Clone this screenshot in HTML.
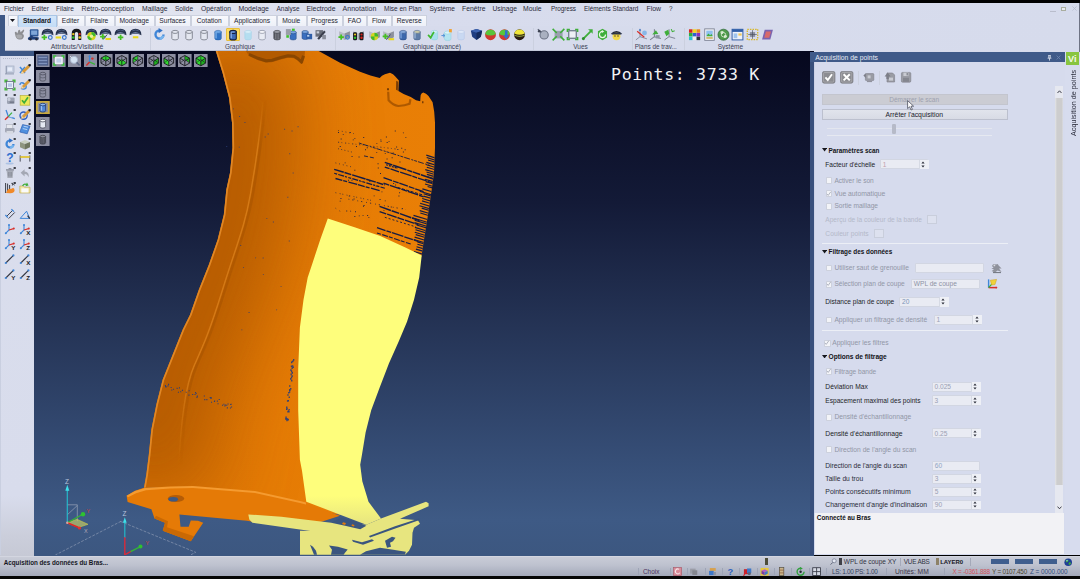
<!DOCTYPE html>
<html lang="fr"><head><meta charset="utf-8"><title>Acquisition de points</title>
<style>
html,body{margin:0;padding:0;background:#000;}
body{width:1080px;height:579px;overflow:hidden;position:relative;font-family:"Liberation Sans",sans-serif;font-size:6.7px;color:#22232e;}
#app{position:absolute;left:0;top:0;width:1080px;height:579px;overflow:hidden;background:#000;}
.abs{position:absolute;}
.t{position:absolute;white-space:nowrap;line-height:1;}
#viewport{position:absolute;left:34px;top:52px;width:779px;height:503px;background:linear-gradient(#06081e 0%,#131a37 30%,#253456 55%,#344b73 78%,#3e5a85 93%,#3c5780 100%);overflow:hidden;}
#viewport svg{position:absolute;left:0;top:0;}
.tab{position:absolute;top:14.5px;height:11.5px;box-sizing:border-box;border:0.5px solid #ccd1de;border-bottom:none;background:linear-gradient(#f8f9fd,#edf0f8);}
.inp{position:absolute;box-sizing:border-box;background:#e9ebf3;border:0.5px solid #d2d6e2;border-radius:1px;}
.cb{position:absolute;box-sizing:border-box;width:6.8px;height:6.8px;background:#f3f4f8;border:0.5px solid #cdd1dd;border-radius:0.8px;}

</style></head><body><div id="app">
<div class="abs" style="left:0.00px;top:2.80px;width:1080.00px;height:49.20px;background:linear-gradient(90deg,#e7e9f2 0%,#e0e3ef 18%,#d8dced 36%,#d6dbec 100%);"></div>
<div class="abs" style="left:5.00px;top:26.00px;width:775.00px;height:24.20px;background:linear-gradient(90deg,#e2e5f0 0%,#dcdfed 25%,#d7dbec 50%,#d6dbec);"></div>
<div class="abs" style="left:0.00px;top:14.50px;width:5.00px;height:41.50px;background:#3d5785;"></div>
<div class="abs" style="left:0.00px;top:51.00px;width:34.00px;height:5.00px;background:#3d5785;"></div>
<div class="abs" style="left:5.00px;top:50.00px;width:775.00px;height:0.70px;background:linear-gradient(90deg,#b4bacc,#c5cadb 80%,#d6dbec);"></div>
<div class="abs" style="left:1078.60px;top:2.80px;width:1.40px;height:552.00px;background:#6e7384;"></div>
<div class="t" style="left:4.00px;top:6.00px;font-size:6.70px;color:#2a2b3a;letter-spacing:-0.015px;">Fichier</div>
<div class="t" style="left:31.50px;top:6.00px;font-size:6.70px;color:#2a2b3a;">Editer</div>
<div class="t" style="left:56.00px;top:6.00px;font-size:6.60px;color:#2a2b3a;">Filaire</div>
<div class="t" style="left:81.50px;top:6.00px;font-size:6.90px;color:#2a2b3a;">Rétro-conception</div>
<div class="t" style="left:142.00px;top:6.00px;font-size:6.80px;color:#2a2b3a;letter-spacing:0.022px;">Maillage</div>
<div class="t" style="left:175.00px;top:6.00px;font-size:6.50px;color:#2a2b3a;letter-spacing:-0.011px;">Solide</div>
<div class="t" style="left:201.00px;top:6.00px;font-size:6.80px;color:#2a2b3a;letter-spacing:0.016px;">Opération</div>
<div class="t" style="left:238.50px;top:6.00px;font-size:6.90px;color:#2a2b3a;letter-spacing:0.025px;">Modelage</div>
<div class="t" style="left:276.50px;top:6.00px;font-size:6.50px;color:#2a2b3a;letter-spacing:-0.018px;">Analyse</div>
<div class="t" style="left:306.50px;top:6.00px;font-size:6.90px;color:#2a2b3a;letter-spacing:-0.016px;">Electrode</div>
<div class="t" style="left:342.50px;top:5.00px;font-size:7.00px;color:#2a2b3a;letter-spacing:0.053px;">Annotation</div>
<div class="t" style="left:384.00px;top:6.00px;font-size:6.50px;color:#2a2b3a;letter-spacing:-0.006px;">Mise en Plan</div>
<div class="t" style="left:429.50px;top:6.00px;font-size:6.60px;color:#2a2b3a;letter-spacing:-0.025px;">Système</div>
<div class="t" style="left:462.00px;top:6.00px;font-size:6.80px;color:#2a2b3a;letter-spacing:0.010px;">Fenêtre</div>
<div class="t" style="left:492.50px;top:6.00px;font-size:6.70px;color:#2a2b3a;letter-spacing:-0.012px;">Usinage</div>
<div class="t" style="left:523.00px;top:6.00px;font-size:6.80px;color:#2a2b3a;">Moule</div>
<div class="t" style="left:551.00px;top:6.00px;font-size:6.40px;color:#2a2b3a;letter-spacing:-0.076px;">Progress</div>
<div class="t" style="left:584.00px;top:6.00px;font-size:6.40px;color:#2a2b3a;">Eléments Standard</div>
<div class="t" style="left:646.50px;top:6.00px;font-size:6.90px;color:#2a2b3a;letter-spacing:-0.017px;">Flow</div>
<div class="t" style="left:669.00px;top:6.00px;font-size:6.40px;color:#2a2b3a;">?</div>
<div class="abs" style="left:1050.00px;top:10.60px;width:6.00px;height:0.80px;background:#b9bdcc;"></div>
<div class="abs" style="left:1061.40px;top:6.60px;width:4.60px;height:4.40px;background:#e9ebf1;border:0.8px solid #a9ad9f;box-sizing:border-box;"></div>
<svg class="abs" style="left:1071.60px;top:6.40px" width="5" height="5" viewBox="0 0 5 5"><path d="M0.4,0.4 L4.6,4.6 M4.6,0.4 L0.4,4.6" stroke="#b4b9c9" stroke-width="0.7"/></svg>
<div class="tab" style="left:8px;width:10px;"></div>
<svg class="abs" style="left:10.3px;top:19.3px" width="5" height="3" viewBox="0 0 5 3"><path d="M0,0H5L2.5,3Z" fill="#15161e"/></svg>
<div class="tab" style="left:18px;width:39px;background:linear-gradient(#d3e6fa,#c3dcf6);border-color:#a9c6e6;height:12px"></div>
<div class="t" style="left:22.92px;top:18.00px;font-size:6.50px;color:#15161e;font-weight:bold;">Standard</div>
<div class="tab" style="left:57px;width:28px;"></div>
<div class="t" style="left:61.75px;top:18.00px;font-size:6.70px;color:#262733;">Editer</div>
<div class="tab" style="left:85px;width:29.5px;"></div>
<div class="t" style="left:90.13px;top:18.00px;font-size:6.70px;color:#262733;">Filaire</div>
<div class="tab" style="left:114.5px;width:40.5px;"></div>
<div class="t" style="left:119.54px;top:18.00px;font-size:6.70px;color:#262733;">Modelage</div>
<div class="tab" style="left:155px;width:36px;"></div>
<div class="t" style="left:159.28px;top:18.00px;font-size:6.70px;color:#262733;">Surfaces</div>
<div class="tab" style="left:191px;width:37.5px;"></div>
<div class="t" style="left:196.77px;top:18.00px;font-size:6.70px;color:#262733;">Cotation</div>
<div class="tab" style="left:228.5px;width:48.0px;"></div>
<div class="t" style="left:233.94px;top:18.00px;font-size:6.70px;color:#262733;">Applications</div>
<div class="tab" style="left:276.5px;width:30.5px;"></div>
<div class="t" style="left:282.13px;top:18.00px;font-size:6.70px;color:#262733;">Moule</div>
<div class="tab" style="left:307px;width:36px;"></div>
<div class="t" style="left:311.10px;top:18.00px;font-size:6.70px;color:#262733;">Progress</div>
<div class="tab" style="left:343px;width:24px;"></div>
<div class="t" style="left:347.80px;top:18.00px;font-size:6.70px;color:#262733;">FAO</div>
<div class="tab" style="left:367px;width:25px;"></div>
<div class="t" style="left:371.93px;top:18.00px;font-size:6.70px;color:#262733;">Flow</div>
<div class="tab" style="left:392px;width:34.5px;"></div>
<div class="t" style="left:396.78px;top:18.00px;font-size:6.70px;color:#262733;">Reverse</div>
<div class="abs" style="left:149.50px;top:28.00px;width:0.70px;height:22.00px;background:#cbd0df;"></div>
<div class="abs" style="left:335.00px;top:28.00px;width:0.70px;height:22.00px;background:#cbd0df;"></div>
<div class="abs" style="left:533.00px;top:28.00px;width:0.70px;height:22.00px;background:#cbd0df;"></div>
<div class="abs" style="left:631.50px;top:28.00px;width:0.70px;height:22.00px;background:#cbd0df;"></div>
<div class="abs" style="left:684.00px;top:28.00px;width:0.70px;height:22.00px;background:#cbd0df;"></div>
<div class="t" style="left:50.70px;top:44.00px;font-size:6.90px;color:#3b3f55;letter-spacing:0.010px;">Attributs/Visibilité</div>
<div class="t" style="left:225.00px;top:44.00px;font-size:6.40px;color:#3b3f55;letter-spacing:0.013px;">Graphique</div>
<div class="t" style="left:403.00px;top:44.00px;font-size:6.60px;color:#3b3f55;letter-spacing:-0.018px;">Graphique (avancé)</div>
<div class="t" style="left:573.30px;top:44.00px;font-size:6.50px;color:#3b3f55;letter-spacing:-0.019px;">Vues</div>
<div class="t" style="left:634.70px;top:44.00px;font-size:6.40px;color:#3b3f55;letter-spacing:-0.007px;">Plans de trav...</div>
<div class="t" style="left:717.80px;top:44.00px;font-size:6.50px;color:#3b3f55;letter-spacing:-0.012px;">Système</div>
<svg class="abs" style="left:12.50px;top:27.90px" width="13" height="13" viewBox="0 0 12 12"><path d="M2,6 Q1,3 3,3.5 L4,5 L5,2 Q6,1 6.6,2.4 L7,4 L9.5,1.5 Q11,1.4 10,3.2 L8.6,5.6 Q10.5,6 10,8 Q9,11 5.5,10.6 Q2.5,10 2,6Z" fill="#8d8e92"/><path d="M3,6.5 Q5,5.5 8,6.4 Q9,8 8,9.5 Q5,10.3 3.4,9Z" fill="#a9aaae"/></svg>
<svg class="abs" style="left:26.50px;top:27.90px" width="13" height="13" viewBox="0 0 12 12"><rect x="2.6" y="1.2" width="8" height="6.6" rx="0.8" fill="#2d5796"/><rect x="3.8" y="2.3" width="5.6" height="4" fill="#7fa6d8"/><path d="M0.8,9.2 L4,6.6 L6,8 L10.8,8.6 L10.8,10.6 L1,10.8Z" fill="#1f3f78"/><circle cx="3.2" cy="10.4" r="1.1" fill="#22283a"/><circle cx="8.8" cy="10.4" r="1.1" fill="#22283a"/></svg>
<svg class="abs" style="left:41.10px;top:27.90px" width="13" height="13" viewBox="0 0 12 12"><path d="M0.5,6.6 Q0.6,0.8 6,0.8 Q11.4,0.8 11.5,6.6 Q6,4.2 0.5,6.6Z" fill="#26324d"/><path d="M1.4,5.6 Q6,2.2 10.6,5.6 Q6,4.3 1.4,5.6Z" fill="#8ea2c4"/><path d="M3,2.6 Q6,1.2 9,2.6" stroke="#55688e" stroke-width="0.7" fill="none"/><path transform="translate(0.6,6.2)" d="M0,1.6h1.7v-1.6h1.6v1.6h1.7v1.6h-1.7v1.6h-1.6v-1.6h-1.7z" fill="#45c022"/><circle cx="8.6" cy="8.8" r="1.7" fill="none" stroke="#3a78cc" stroke-width="1.1"/></svg>
<svg class="abs" style="left:55.10px;top:27.90px" width="13" height="13" viewBox="0 0 12 12"><path d="M0.5,6.6 Q0.6,0.8 6,0.8 Q11.4,0.8 11.5,6.6 Q6,4.2 0.5,6.6Z" fill="#26324d"/><path d="M1.4,5.6 Q6,2.2 10.6,5.6 Q6,4.3 1.4,5.6Z" fill="#8ea2c4"/><path d="M3,2.6 Q6,1.2 9,2.6" stroke="#55688e" stroke-width="0.7" fill="none"/><rect x="0.6" y="7.8" width="5" height="1.9" fill="#e9d91c"/><circle cx="8.6" cy="8.8" r="1.7" fill="none" stroke="#3a78cc" stroke-width="1.1"/></svg>
<svg class="abs" style="left:69.70px;top:27.90px" width="13" height="13" viewBox="0 0 12 12"><path d="M1.6,11 V5 Q1.6,0.8 6,0.8 Q10.4,0.8 10.4,5 V11 H7.6 V5.4 Q7.6,3.6 6,3.6 Q4.4,3.6 4.4,5.4 V11Z" fill="#17181c"/><circle cx="3" cy="5.6" r="1.1" fill="#e9c61c"/><circle cx="3" cy="8.8" r="1.2" fill="#2fbf2f"/><circle cx="9" cy="5.6" r="1.1" fill="#d8261c"/><circle cx="9" cy="8.8" r="1.2" fill="#e9c61c"/></svg>
<svg class="abs" style="left:84.50px;top:27.90px" width="13" height="13" viewBox="0 0 12 12"><path d="M0.5,6.6 Q0.6,0.8 6,0.8 Q11.4,0.8 11.5,6.6 Q6,4.2 0.5,6.6Z" fill="#26324d"/><path d="M1.4,5.6 Q6,2.2 10.6,5.6 Q6,4.3 1.4,5.6Z" fill="#8ea2c4"/><path d="M3,2.6 Q6,1.2 9,2.6" stroke="#55688e" stroke-width="0.7" fill="none"/><circle cx="6" cy="7.6" r="3.8" fill="#d6d41e"/><path d="M6,3.8 A3.8,3.8 0 0 1 9.8,7.6 L6,7.6Z" fill="#3fb82e"/><path d="M2.2,7.6 A3.8,3.8 0 0 0 6,11.4 L6,7.6Z" fill="#3fb82e"/><circle cx="6" cy="7.6" r="1.6" fill="#e8ef9a"/></svg>
<svg class="abs" style="left:99.00px;top:27.90px" width="13" height="13" viewBox="0 0 12 12"><path d="M0.5,6.6 Q0.6,0.8 6,0.8 Q11.4,0.8 11.5,6.6 Q6,4.2 0.5,6.6Z" fill="#26324d"/><path d="M1.4,5.6 Q6,2.2 10.6,5.6 Q6,4.3 1.4,5.6Z" fill="#8ea2c4"/><path d="M3,2.6 Q6,1.2 9,2.6" stroke="#55688e" stroke-width="0.7" fill="none"/><path transform="translate(1,5.6)" d="M0,1.6h1.7v-1.6h1.6v1.6h1.7v1.6h-1.7v1.6h-1.6v-1.6h-1.7z" fill="#45c022"/><rect x="6" y="9.2" width="5" height="1.9" fill="#e9d91c"/><path d="M4,10.5 L7.6,6" stroke="#3b4a6a" stroke-width="0.9"/></svg>
<svg class="abs" style="left:114.00px;top:27.90px" width="13" height="13" viewBox="0 0 12 12"><path d="M0.5,6.6 Q0.6,0.8 6,0.8 Q11.4,0.8 11.5,6.6 Q6,4.2 0.5,6.6Z" fill="#26324d"/><path d="M1.4,5.6 Q6,2.2 10.6,5.6 Q6,4.3 1.4,5.6Z" fill="#8ea2c4"/><path d="M3,2.6 Q6,1.2 9,2.6" stroke="#55688e" stroke-width="0.7" fill="none"/><path transform="translate(3.6,6.2)" d="M0,1.6h1.7v-1.6h1.6v1.6h1.7v1.6h-1.7v1.6h-1.6v-1.6h-1.7z" fill="#45c022"/></svg>
<svg class="abs" style="left:128.50px;top:27.90px" width="13" height="13" viewBox="0 0 12 12"><path d="M0.5,6.6 Q0.6,0.8 6,0.8 Q11.4,0.8 11.5,6.6 Q6,4.2 0.5,6.6Z" fill="#26324d"/><path d="M1.4,5.6 Q6,2.2 10.6,5.6 Q6,4.3 1.4,5.6Z" fill="#8ea2c4"/><path d="M3,2.6 Q6,1.2 9,2.6" stroke="#55688e" stroke-width="0.7" fill="none"/><rect x="3.6" y="7.6" width="5" height="1.9" fill="#e9d91c"/></svg>
<svg class="abs" style="left:152.80px;top:27.90px" width="13" height="13" viewBox="0 0 12 12"><path d="M6,1.2 A4.8,4.8 0 1 0 10.8,6 H8.6 A2.6,2.6 0 1 1 6,3.4 Z" fill="#3f86d8"/><path d="M5.2,0 L9,2.4 L5.2,4.8Z" fill="#2f6fc4"/><path d="M6,10.8 A4.8,4.8 0 0 0 10.6,7.4 L8.4,7 A2.6,2.6 0 0 1 6,8.6Z" fill="#76b4ee"/></svg>
<svg class="abs" style="left:168.50px;top:27.90px" width="13" height="13" viewBox="0 0 12 12"><path d="M2.6,3.6 V9.6 A3,1.4 0 0 0 8.6,9.6 V3.6 Z" fill="#e4e7f0" stroke="#7a7e8a" stroke-width="0.8"/><ellipse cx="5.6" cy="3.6" rx="3" ry="1.4" fill="#e4e7f0" stroke="#7a7e8a" stroke-width="0.8"/></svg>
<svg class="abs" style="left:183.00px;top:27.90px" width="13" height="13" viewBox="0 0 12 12"><path d="M2.6,3.6 V9.6 A3,1.4 0 0 0 8.6,9.6 V3.6 Z" fill="#e4e7f0" stroke="#7a7e8a" stroke-width="0.8"/><ellipse cx="5.6" cy="3.6" rx="3" ry="1.4" fill="#e4e7f0" stroke="#7a7e8a" stroke-width="0.8"/></svg>
<svg class="abs" style="left:197.80px;top:27.90px" width="13" height="13" viewBox="0 0 12 12"><path d="M2.6,3.6 V9.6 A3,1.4 0 0 0 8.6,9.6 V3.6 Z" fill="#e4e7f0" stroke="#7a7e8a" stroke-width="0.8"/><ellipse cx="5.6" cy="3.6" rx="3" ry="1.4" fill="#e4e7f0" stroke="#7a7e8a" stroke-width="0.8"/></svg>
<svg class="abs" style="left:212.30px;top:27.90px" width="13" height="13" viewBox="0 0 12 12"><path d="M2.6,3.6 V9.6 A3,1.4 0 0 0 8.6,9.6 V3.6 Z" fill="#2f73c6" stroke="#245ea8" stroke-width="0.5"/><ellipse cx="5.6" cy="3.6" rx="3" ry="1.4" fill="#6ea6e4" stroke="#245ea8" stroke-width="0.5"/><rect x="3" y="3.6" width="1.5" height="6" fill="#79b0ea" opacity="0.8"/></svg>
<div class="abs" style="left:226.00px;top:27.60px;width:13.60px;height:13.60px;background:#fbdc63;border-radius:1px;border:0.5px solid #e9bf3a;box-sizing:border-box;"></div>
<svg class="abs" style="left:226.70px;top:27.90px" width="13" height="13" viewBox="0 0 12 12"><path d="M2.6,3.6 V9.6 A3,1.4 0 0 0 8.6,9.6 V3.6 Z" fill="#3b69b6" stroke="#15213f" stroke-width="1.0"/><ellipse cx="5.6" cy="3.6" rx="3" ry="1.4" fill="#5f8ad0" stroke="#15213f" stroke-width="1.0"/><rect x="3.2" y="3.8" width="1.4" height="5.6" fill="#8db2e8" opacity="0.8"/></svg>
<svg class="abs" style="left:241.90px;top:27.90px" width="13" height="13" viewBox="0 0 12 12"><path d="M2.6,3.6 V9.6 A3,1.4 0 0 0 8.6,9.6 V3.6 Z" fill="#b4def0" stroke="#a4d0e6" stroke-width="0.5"/><ellipse cx="5.6" cy="3.6" rx="3" ry="1.4" fill="#d6eef8" stroke="#a4d0e6" stroke-width="0.5"/></svg>
<svg class="abs" style="left:256.30px;top:27.90px" width="13" height="13" viewBox="0 0 12 12"><path d="M2.6,3.6 V9.6 A3,1.4 0 0 0 8.6,9.6 V3.6 Z" fill="#e9ecf4" stroke="#8d93a4" stroke-width="0.7"/><ellipse cx="5.6" cy="3.6" rx="3" ry="1.4" fill="#f5f6fa" stroke="#8d93a4" stroke-width="0.7"/></svg>
<svg class="abs" style="left:270.80px;top:27.90px" width="13" height="13" viewBox="0 0 12 12"><path d="M2.6,3.6 V9.6 A3,1.4 0 0 0 8.6,9.6 V3.6 Z" fill="#7c7f88" stroke="#4c4f58" stroke-width="0.7"/><ellipse cx="5.6" cy="3.6" rx="3" ry="1.4" fill="#9a9da6" stroke="#4c4f58" stroke-width="0.7"/><path d="M3.4,4.4V9.8M5.5,4.8V10.6M7.6,4.4V9.8" stroke="#3e4048" stroke-width="0.7"/></svg>
<svg class="abs" style="left:284.80px;top:27.90px" width="13" height="13" viewBox="0 0 12 12"><g transform="translate(2.2,0.6) scale(0.95)"><path d="M2.6,3.6 V9.6 A3,1.4 0 0 0 8.6,9.6 V3.6 Z" fill="#3a6fc0" stroke="#23467e" stroke-width="0.5"/><ellipse cx="5.6" cy="3.6" rx="3" ry="1.4" fill="#7aa6e0" stroke="#23467e" stroke-width="0.5"/></g><rect x="0.8" y="1" width="4.6" height="5.4" fill="#9a9ea8"/><rect x="1.2" y="6.6" width="2.4" height="2.4" fill="#3fc02a"/><rect x="6.4" y="0.6" width="2.6" height="2" fill="#3fc02a"/></svg>
<svg class="abs" style="left:299.80px;top:27.90px" width="13" height="13" viewBox="0 0 12 12"><g transform="translate(-0.6,0.2) scale(0.95)"><path d="M2.6,3.6 V9.6 A3,1.4 0 0 0 8.6,9.6 V3.6 Z" fill="#3a6fc0" stroke="#23467e" stroke-width="0.5"/><ellipse cx="5.6" cy="3.6" rx="3" ry="1.4" fill="#7aa6e0" stroke="#23467e" stroke-width="0.5"/></g><rect x="5.6" y="5.4" width="5.6" height="5" fill="#2f5ea8"/><rect x="6.6" y="6.4" width="2" height="1.6" fill="#b9d2f0"/></svg>
<svg class="abs" style="left:314.00px;top:27.90px" width="13" height="13" viewBox="0 0 12 12"><rect x="1.4" y="2" width="7" height="6" fill="#6a6e7a"/><path d="M3,9.6 L9.4,2.4 L10.8,3.6 L4.6,10.8Z" fill="#3a3e4c"/><rect x="7.6" y="6.4" width="3.4" height="4" fill="#8b8f9c"/><rect x="2.4" y="3" width="2.4" height="2" fill="#c9cdd8"/></svg>
<svg class="abs" style="left:338.00px;top:27.90px" width="13" height="13" viewBox="0 0 12 12"><path d="M1,3 L6,1 L11,3 L6,5Z" fill="#d9dce3"/><path d="M1,3 L6,5 V11 L1,8.6Z" fill="#b8bcc6"/><path d="M11,3 L6,5 V11 L11,8.6Z" fill="#8d919c"/><path transform="translate(0.4,6)" d="M0,1.6h1.7v-1.6h1.6v1.6h1.7v1.6h-1.7v1.6h-1.6v-1.6h-1.7z" fill="#45c022"/><circle cx="8.8" cy="8.6" r="1.7" fill="none" stroke="#3a78cc" stroke-width="1.1"/></svg>
<svg class="abs" style="left:352.30px;top:27.90px" width="13" height="13" viewBox="0 0 12 12"><path d="M1,3 L6,1 L11,3 L6,5Z" fill="#d9dce3"/><path d="M1,3 L6,5 V11 L1,8.6Z" fill="#b8bcc6"/><path d="M11,3 L6,5 V11 L11,8.6Z" fill="#8d919c"/><rect x="1" y="4" width="3.6" height="7.4" rx="1" fill="#17181c"/><rect x="7" y="4" width="3.6" height="7.4" rx="1" fill="#17181c"/><circle cx="2.8" cy="6" r="1" fill="#e9c61c"/><circle cx="2.8" cy="9" r="1.1" fill="#2fbf2f"/><circle cx="8.8" cy="6" r="1" fill="#d8261c"/><circle cx="8.8" cy="9" r="1.1" fill="#d8261c"/></svg>
<svg class="abs" style="left:367.50px;top:27.90px" width="13" height="13" viewBox="0 0 12 12"><path d="M1,3 L6,1 L11,3 L6,5Z" fill="#d9dce3"/><path d="M1,3 L6,5 V11 L1,8.6Z" fill="#b8bcc6"/><path d="M11,3 L6,5 V11 L11,8.6Z" fill="#8d919c"/><circle cx="6" cy="7.8" r="3.4" fill="#d6d41e"/><path d="M6,4.4 A3.4,3.4 0 0 1 9.4,7.8 L6,7.8Z" fill="#3fb82e"/><path d="M2.6,7.8 A3.4,3.4 0 0 0 6,11.2 L6,7.8Z" fill="#3fb82e"/></svg>
<svg class="abs" style="left:381.80px;top:27.90px" width="13" height="13" viewBox="0 0 12 12"><path d="M1,3 L6,1 L11,3 L6,5Z" fill="#d9dce3"/><path d="M1,3 L6,5 V11 L1,8.6Z" fill="#b8bcc6"/><path d="M11,3 L6,5 V11 L11,8.6Z" fill="#8d919c"/><path transform="translate(0.6,5.4)" d="M0,1.6h1.7v-1.6h1.6v1.6h1.7v1.6h-1.7v1.6h-1.6v-1.6h-1.7z" fill="#45c022"/><rect x="6.2" y="9.4" width="5" height="1.9" fill="#e9d91c"/><path d="M4,10.8 L7.8,6" stroke="#3b4a6a" stroke-width="0.9"/></svg>
<svg class="abs" style="left:397.10px;top:27.90px" width="13" height="13" viewBox="0 0 12 12"><path d="M2.6,3.6 V9.6 A3,1.4 0 0 0 8.6,9.6 V3.6 Z" fill="#3d68ac" stroke="#2a4a82" stroke-width="0.5"/><ellipse cx="5.6" cy="3.6" rx="3" ry="1.4" fill="#86a8d8" stroke="#2a4a82" stroke-width="0.5"/><rect x="3" y="3.8" width="1.4" height="5.8" fill="#8db2e8" opacity="0.7"/></svg>
<svg class="abs" style="left:411.30px;top:27.90px" width="13" height="13" viewBox="0 0 12 12"><path d="M2.6,3.6 V9.6 A3,1.4 0 0 0 8.6,9.6 V3.6 Z" fill="#5f7da8" stroke="#46608a" stroke-width="0.5"/><ellipse cx="5.6" cy="3.6" rx="3" ry="1.4" fill="#c9c9a8" stroke="#46608a" stroke-width="0.5"/><rect x="3" y="3.8" width="1.4" height="5.8" fill="#a8bfe0" opacity="0.7"/></svg>
<svg class="abs" style="left:426.70px;top:27.90px" width="13" height="13" viewBox="0 0 12 12"><g transform="translate(1.2,0)"><path d="M2.6,3.6 V9.6 A3,1.4 0 0 0 8.6,9.6 V3.6 Z" fill="#a8e0ee" stroke="#8fd0e2" stroke-width="0.5"/><ellipse cx="5.6" cy="3.6" rx="3" ry="1.4" fill="#d2f0f8" stroke="#8fd0e2" stroke-width="0.5"/></g><path d="M1,6.4 L3.4,9 L6.4,3.6" stroke="#3fb82e" stroke-width="1.6" fill="none"/></svg>
<svg class="abs" style="left:441.00px;top:27.90px" width="13" height="13" viewBox="0 0 12 12"><g transform="translate(0.6,0.6)"><path d="M2.6,3.6 V9.6 A3,1.4 0 0 0 8.6,9.6 V3.6 Z" fill="#b4e4f0" stroke="#8fd0e2" stroke-width="0.5"/><ellipse cx="5.6" cy="3.6" rx="3" ry="1.4" fill="#d8f2f8" stroke="#8fd0e2" stroke-width="0.5"/></g><rect x="7.4" y="1" width="2.6" height="3" fill="#f0a030"/><path d="M0.4,7 h3 M2,5.6 L3.6,7 L2,8.4" stroke="#4a90d8" stroke-width="0.9" fill="none"/></svg>
<svg class="abs" style="left:455.30px;top:27.90px" width="13" height="13" viewBox="0 0 12 12"><path d="M2.6,3.6 V9.6 A3,1.4 0 0 0 8.6,9.6 V3.6 Z" fill="#c9d9f2" stroke="#b4c6e6" stroke-width="0.5"/><ellipse cx="5.6" cy="3.6" rx="3" ry="1.4" fill="#dfe9f8" stroke="#b4c6e6" stroke-width="0.5"/></svg>
<svg class="abs" style="left:470.00px;top:27.90px" width="13" height="13" viewBox="0 0 12 12"><path d="M0.8,2.6 L6,1 L11.2,2.6 L10,8 L6,11 L2,8Z" fill="#1f3d80"/><path d="M0.8,2.6 L6,4.4 L11.2,2.6 L6,1Z" fill="#3d63b0"/><path d="M6,4.4 L6,11 L10,8 L11.2,2.6Z" fill="#142a5c"/></svg>
<svg class="abs" style="left:483.50px;top:27.90px" width="13" height="13" viewBox="0 0 12 12"><circle cx="6" cy="6.2" r="5" fill="#cf3a30"/><path d="M1.1,5.6 A5,5 0 0 1 10.9,5.6 Q6,8.4 1.1,5.6Z" fill="#58c63a"/></svg>
<svg class="abs" style="left:498.10px;top:27.90px" width="13" height="13" viewBox="0 0 12 12"><circle cx="6" cy="6.2" r="5" fill="#cf3a30"/><path d="M1.1,5.6 A5,5 0 0 1 10.9,5.6 Q6,8.4 1.1,5.6Z" fill="#58c63a"/><path d="M6.4,2 h2.4 v4.6 h1.6 L7.6,10.4 L4.8,6.6 h1.6z" fill="#2f6fd0"/></svg>
<svg class="abs" style="left:513.00px;top:27.90px" width="13" height="13" viewBox="0 0 12 12"><circle cx="6" cy="6.2" r="5" fill="#2a1c12"/><path d="M1.2,5 A5,5 0 0 1 10.8,5 Q6,7.4 1.2,5Z" fill="#f0e63a"/><path d="M1.1,6.4 Q6,9 10.9,6.4" stroke="#8a9a3a" stroke-width="1" fill="none"/></svg>
<svg class="abs" style="left:537.30px;top:27.90px" width="13" height="13" viewBox="0 0 12 12"><circle cx="6.6" cy="6.4" r="3.8" fill="#a9b0c0" stroke="#6d7486" stroke-width="1"/><path d="M0.8,1.2 L4,4" stroke="#5d6476" stroke-width="1.4"/><circle cx="2" cy="3" r="1.2" fill="#3a4050"/></svg>
<svg class="abs" style="left:551.80px;top:27.90px" width="13" height="13" viewBox="0 0 12 12"><rect x="2.4" y="2.6" width="7.4" height="7" fill="#9aa0ae"/><path d="M0.6,0.8 L4.4,4.6 M11.4,0.8 L7.6,4.6 M0.6,11.4 L4.4,7.6 M11.4,11.4 L7.6,7.6" stroke="#3fae3a" stroke-width="1.5"/></svg>
<svg class="abs" style="left:566.30px;top:27.90px" width="13" height="13" viewBox="0 0 12 12"><rect x="2.6" y="2.6" width="6.8" height="6.8" fill="#eef0f6" stroke="#3a4a5a" stroke-width="0.8"/><path d="M0.6,0.6 h3 v1.4 h-1.6 v1.6 h-1.4z M11.4,0.6 h-3 v1.4 h1.6 v1.6 h1.4z M0.6,11.4 h3 v-1.4 h-1.6 v-1.6 h-1.4z M11.4,11.4 h-3 v-1.4 h1.6 v-1.6 h1.4z" fill="#3fae3a"/></svg>
<svg class="abs" style="left:581.30px;top:27.90px" width="13" height="13" viewBox="0 0 12 12"><path d="M2,10 L9.6,2.4" stroke="#3fae3a" stroke-width="1.7"/><path d="M6.6,1.2 L10.8,1.2 L10.8,5.4Z" fill="#3fae3a"/><circle cx="2.2" cy="9.8" r="1.4" fill="#2f8e2e"/></svg>
<svg class="abs" style="left:595.80px;top:27.90px" width="13" height="13" viewBox="0 0 12 12"><path d="M6,0.8 L10.2,3 V8.8 L6,11.2 L1.8,8.8 V3Z" fill="#3fae3a"/><path d="M6,3.2 A2.8,2.8 0 1 0 8.8,6" stroke="#eaf6e6" stroke-width="1.1" fill="none"/><path d="M5.4,1.8 L7.6,3.2 L5.4,4.6Z" fill="#eaf6e6"/></svg>
<svg class="abs" style="left:609.50px;top:27.90px" width="13" height="13" viewBox="0 0 12 12"><circle cx="6" cy="7.6" r="3.6" fill="#f2d94a"/><path d="M0.6,5.2 Q6,0.2 11.4,5.2 Q6,3.6 0.6,5.2Z" fill="#22283a"/><rect x="1.2" y="4.6" width="9.6" height="1.4" rx="0.7" fill="#2c3448"/><circle cx="4.6" cy="7.4" r="0.6" fill="#3a2a14"/><circle cx="7.4" cy="7.4" r="0.6" fill="#3a2a14"/></svg>
<svg class="abs" style="left:634.90px;top:27.90px" width="13" height="13" viewBox="0 0 12 12"><path d="M4.6,8 L4.6,1 M4.6,8 L11,10 M4.6,8 L0.8,11" stroke="#8a8fa0" stroke-width="0.9" fill="none"/><path d="M3.4,2.6 L4.6,0.4 L5.8,2.6Z" fill="#3a78cc"/><path d="M2,3 L8.6,8.6" stroke="#d8302a" stroke-width="1.1"/><circle cx="8.8" cy="4.6" r="2.2" fill="#7ab0e6" opacity="0.85"/></svg>
<svg class="abs" style="left:649.30px;top:27.90px" width="13" height="13" viewBox="0 0 12 12"><path d="M5,8 L5,1.2 M5,8 L11,9.6 M5,8 L1,11" stroke="#7d8292" stroke-width="1"/><path d="M3,6 L6.4,2 L8.6,5.6Z" fill="#3fae3a"/><rect x="6.2" y="6.6" width="3.6" height="3" fill="#8d93a4"/></svg>
<svg class="abs" style="left:662.50px;top:27.90px" width="13" height="13" viewBox="0 0 12 12"><path d="M5.6,8 L5.6,1.2 M5.6,8 L11.2,9.6 M5.6,8 L1.4,11" stroke="#7d8292" stroke-width="0.9"/><path d="M1.2,3.4 L4.8,1.6 L5.8,5.4 L3.2,7.6Z" fill="#3fae3a"/><path d="M7.6,1 L8.6,3.4 L10.8,2.6" stroke="#3fae3a" stroke-width="1" fill="none"/></svg>
<svg class="abs" style="left:687.80px;top:27.90px" width="13" height="13" viewBox="0 0 12 12"><rect x="0.9" y="1.2" width="3.3" height="3.2" fill="#d8261c"/><rect x="4.4" y="1.2" width="3.3" height="3.2" fill="#f0d81c"/><rect x="7.9" y="1.2" width="3.3" height="3.2" fill="#e88a1c"/><rect x="0.9" y="4.6" width="3.3" height="3.2" fill="#2fae3a"/><rect x="4.4" y="4.6" width="3.3" height="3.2" fill="#2f5fd0"/><rect x="7.9" y="4.6" width="3.3" height="3.2" fill="#8a2fc0"/><rect x="0.9" y="8.0" width="3.3" height="3.2" fill="#2fc0d0"/><rect x="4.4" y="8.0" width="3.3" height="3.2" fill="#f0f0f0"/><rect x="7.9" y="8.0" width="3.3" height="3.2" fill="#30343f"/></svg>
<svg class="abs" style="left:702.80px;top:27.90px" width="13" height="13" viewBox="0 0 12 12"><rect x="1.6" y="0.8" width="8.8" height="10.6" fill="#f2f3f7" stroke="#7a8092" stroke-width="0.8"/><rect x="3" y="2.4" width="6" height="5.2" fill="#8fc0ee"/><path d="M3,7.6 L5,5 L6.6,6.6 L7.8,5.6 L9,7.6Z" fill="#3fae3a"/><rect x="3" y="8.6" width="6" height="1.2" fill="#c2a03a"/></svg>
<svg class="abs" style="left:716.70px;top:27.90px" width="13" height="13" viewBox="0 0 12 12"><circle cx="6" cy="6.2" r="5.1" fill="#4f9a4a" stroke="#2f6a3a" stroke-width="0.7"/><path d="M3,3.4 Q5,2 6.4,3.6 Q5.6,5.8 3.8,6Z M6.6,6.6 Q9,6 9.4,7.8 Q8,10 6.4,9Z" fill="#cfe6c6"/><circle cx="6" cy="6.2" r="2" fill="none" stroke="#e6f0e0" stroke-width="0.7"/></svg>
<svg class="abs" style="left:731.10px;top:27.90px" width="13" height="13" viewBox="0 0 12 12"><rect x="1" y="1.2" width="10" height="9.8" fill="#eef2fa" stroke="#2f5ea8" stroke-width="0.9"/><rect x="1" y="1.2" width="10" height="2.4" fill="#2f5ea8"/><rect x="2.4" y="5" width="3.4" height="4.4" fill="#9ec4ee"/><rect x="6.8" y="5" width="3" height="2" fill="#f0c85a"/></svg>
<svg class="abs" style="left:745.60px;top:27.90px" width="13" height="13" viewBox="0 0 12 12"><rect x="1.2" y="1.2" width="9.6" height="9.6" fill="none" stroke="#d8b82a" stroke-width="1.2" stroke-dasharray="1.4 1"/><rect x="3.6" y="3.8" width="4.8" height="4.4" fill="#8a90a0"/><path d="M2,6 h8 M6,2 v8" stroke="#4a5060" stroke-width="0.6"/></svg>
<svg class="abs" style="left:760.70px;top:27.90px" width="13" height="13" viewBox="0 0 12 12"><path d="M3.4,1.6 L11,1.6 L8.6,10.6 L1,10.6Z" fill="#7a64b0"/><path d="M4.6,3.2 L9.2,3.2 L7.6,9 L3,9Z" fill="#d86a6a"/></svg>
<div class="abs" style="left:0.00px;top:55.60px;width:34.00px;height:500.00px;background:linear-gradient(#dadeed 0%,#d8dcec 88%,#cbcedb 96%,#c6c9d5 100%);"></div>
<div class="abs" style="left:0.00px;top:55.60px;width:1.20px;height:499.40px;background:#c9cfe0;"></div>
<div class="abs" style="left:3.00px;top:58.00px;width:26.00px;height:1.20px;background:repeating-linear-gradient(90deg,#b3b9cb 0 0.8px,transparent 0.8px 2px);"></div>
<div class="abs" style="left:3.00px;top:200.50px;width:28.00px;height:0.80px;background:repeating-linear-gradient(90deg,#b3b9cb 0 0.8px,transparent 0.8px 2px);"></div>
<svg class="abs" style="left:3.90px;top:64.20px" width="12" height="12" viewBox="0 0 12 12"><rect x="2" y="2" width="8" height="6.4" fill="#c9d2e4" stroke="#a9b2c6" stroke-width="0.8"/><rect x="3.6" y="3.4" width="4.4" height="3.4" fill="#e8eefa"/><rect x="1" y="9" width="9" height="1.6" fill="#aab2c6"/><path d="M2.4,2 V10" stroke="#8d96ac" stroke-width="0.8"/></svg>
<svg class="abs" style="left:18.60px;top:64.20px" width="12" height="12" viewBox="0 0 12 12"><path d="M1,3 L6,9 M6,3 L1,9" stroke="#3f86d8" stroke-width="1.5"/><path d="M2.2,9.8 L3,7 L9,1 L11,3 L5,9Z" fill="#d89a3a"/><path d="M9,1 L11,3 L11.6,1.6 L10.4,0.4Z" fill="#20222c"/><path d="M2.2,9.8 L3,7 L5,9Z" fill="#f0d8a8"/><rect x="9.6" y="0.2" width="2.2" height="1.6" fill="#15161c"/></svg>
<svg class="abs" style="left:3.90px;top:79.10px" width="12" height="12" viewBox="0 0 12 12"><rect x="2.6" y="2.6" width="6.8" height="6.8" fill="#e8eefa" stroke="#4a5a6a" stroke-width="0.7"/><rect x="4" y="4.4" width="4" height="3.4" fill="#b8cbe8"/><path d="M0.4,0.4 h3.2 v1.6 h-1.6 v1.6 h-1.6z M11.6,0.4 h-3.2 v1.6 h1.6 v1.6 h1.6z M0.4,11.6 h3.2 v-1.6 h-1.6 v-1.6 h-1.6z M11.6,11.6 h-3.2 v-1.6 h1.6 v-1.6 h1.6z" fill="#4bb83f"/></svg>
<svg class="abs" style="left:18.60px;top:79.10px" width="12" height="12" viewBox="0 0 12 12"><path d="M1,6 Q1,3 4,4 Q8,6 7,9 Q5,11 2,9.4" stroke="#3f86d8" stroke-width="1.4" fill="none"/><path d="M2.2,9.8 L3,7 L9,1 L11,3 L5,9Z" fill="#d89a3a"/><path d="M9,1 L11,3 L11.6,1.6 L10.4,0.4Z" fill="#20222c"/><path d="M2.2,9.8 L3,7 L5,9Z" fill="#f0d8a8"/><rect x="9.6" y="0.2" width="2.2" height="1.6" fill="#15161c"/></svg>
<svg class="abs" style="left:3.90px;top:94.00px" width="12" height="12" viewBox="0 0 12 12"><path d="M1,1 h2.4 M2.2,0 v2.2" stroke="#20222c" stroke-width="0.8"/><rect x="3" y="3.4" width="7.6" height="6.6" rx="1.2" fill="#9da3b3"/><circle cx="5" cy="5.4" r="1.6" fill="#c9cedb"/><rect x="5.6" y="7.4" width="4.4" height="1.6" fill="#757b8c"/><rect x="9.6" y="0.2" width="2.2" height="1.6" fill="#15161c"/></svg>
<svg class="abs" style="left:18.60px;top:94.00px" width="12" height="12" viewBox="0 0 12 12"><rect x="1.2" y="1.6" width="9.6" height="9.6" fill="#eee85a" stroke="#b8b23a" stroke-width="0.7"/><path d="M3,6.2 L5.2,8.8 L9,3.2" stroke="#3fae3a" stroke-width="1.7" fill="none"/><rect x="9.6" y="0.2" width="2.2" height="1.6" fill="#15161c"/></svg>
<svg class="abs" style="left:3.90px;top:108.60px" width="12" height="12" viewBox="0 0 12 12"><path d="M2,1 L4.4,7.4 L10.8,9.6" stroke="#3f86d8" stroke-width="1.3" fill="none"/><path d="M4.4,7.4 L1,10.8" stroke="#d8302a" stroke-width="1.4"/><circle cx="7.4" cy="5.6" r="2.8" fill="#cfe0f4" opacity="0.9"/><path d="M4.4,7.4 L8,3.6" stroke="#3fae3a" stroke-width="1.2"/><rect x="9.6" y="0.2" width="2.2" height="1.6" fill="#15161c"/></svg>
<svg class="abs" style="left:18.60px;top:108.60px" width="12" height="12" viewBox="0 0 12 12"><circle cx="4.6" cy="6.6" r="3.6" stroke="#2f5fc0" stroke-width="1.4" fill="none"/><path d="M2,9.2 L7.2,4" stroke="#2f5fc0" stroke-width="1.2"/><path d="M2.2,9.8 L3,7 L9,1 L11,3 L5,9Z" fill="#d89a3a"/><path d="M9,1 L11,3 L11.6,1.6 L10.4,0.4Z" fill="#20222c"/><path d="M2.2,9.8 L3,7 L5,9Z" fill="#f0d8a8"/><rect x="9.6" y="0.2" width="2.2" height="1.6" fill="#15161c"/></svg>
<svg class="abs" style="left:3.90px;top:123.20px" width="12" height="12" viewBox="0 0 12 12"><rect x="2.4" y="1.4" width="6.4" height="4" fill="#e6e8ee" stroke="#a9adba" stroke-width="0.6"/><rect x="1" y="5" width="9.6" height="4.4" rx="0.8" fill="#a4a8b6"/><rect x="2.6" y="8" width="6.4" height="2.8" fill="#d6d9e2"/><rect x="9.6" y="0.2" width="2.2" height="1.6" fill="#15161c"/></svg>
<svg class="abs" style="left:18.60px;top:123.20px" width="12" height="12" viewBox="0 0 12 12"><path d="M3.6,1.6 L11,3.2 L8.2,10.8 L0.8,9Z" fill="#4f8fde" stroke="#2f5fb0" stroke-width="0.7"/><path d="M4.6,3.2 L9,4.2 M3.8,5.6 L8.2,6.6" stroke="#cfe2fa" stroke-width="0.8"/><rect x="9.6" y="0.2" width="2.2" height="1.6" fill="#15161c"/></svg>
<svg class="abs" style="left:3.90px;top:137.60px" width="12" height="12" viewBox="0 0 12 12"><path d="M6,1.4 A4.6,4.6 0 1 0 10.6,6 H8.4 A2.4,2.4 0 1 1 6,3.6 Z" fill="#3f86d8"/><path d="M5.2,0.2 L9,2.6 L5.2,5Z" fill="#2f6fc4"/><path d="M6,10.6 A4.6,4.6 0 0 0 10.4,7.4 L8.2,7 A2.4,2.4 0 0 1 6,8.4Z" fill="#76b4ee"/><rect x="9.6" y="0.2" width="2.2" height="1.6" fill="#15161c"/></svg>
<svg class="abs" style="left:18.60px;top:137.60px" width="12" height="12" viewBox="0 0 12 12"><path d="M1,4 L6,2 L11,4 L6,6Z" fill="#c9d0c2"/><path d="M1,4 L6,6 V11.4 L1,9.2Z" fill="#8e957f"/><path d="M11,4 L6,6 V11.4 L11,9.2Z" fill="#6f765f"/><rect x="9.6" y="0.2" width="2.2" height="1.6" fill="#15161c"/></svg>
<svg class="abs" style="left:4.00px;top:152.00px" width="12" height="13" viewBox="0 0 12 13"><text x="2.2" y="10.2" font-family="Liberation Sans,sans-serif" font-weight="bold" font-size="12" fill="#2f6fd0">?</text><ellipse cx="5.6" cy="11.6" rx="4" ry="1" fill="#9ab6e0" opacity="0.7"/><rect x="9.6" y="0.2" width="2.2" height="1.6" fill="#15161c"/></svg>
<svg class="abs" style="left:18.60px;top:152.30px" width="12" height="12" viewBox="0 0 12 12"><path d="M1.2,3.4 V9.6 M10.8,3.4 V9.6" stroke="#3a3e4a" stroke-width="0.9"/><path d="M1.2,5 H10.8" stroke="#e0c020" stroke-width="1.6"/><rect x="9.6" y="0.2" width="2.2" height="1.6" fill="#15161c"/></svg>
<svg class="abs" style="left:3.90px;top:166.80px" width="12" height="12" viewBox="0 0 12 12"><path d="M2.6,3.6 H9.4 L8.6,11 H3.4Z" fill="#a9adb8"/><rect x="2" y="2.2" width="8" height="1.4" fill="#8b8f9c"/><rect x="4.6" y="1" width="2.8" height="1.4" fill="#8b8f9c"/><path d="M4.6,5 V9.6 M6,5 V9.6 M7.4,5 V9.6" stroke="#7a7e8a" stroke-width="0.6"/><rect x="9.6" y="0.2" width="2.2" height="1.6" fill="#15161c"/></svg>
<svg class="abs" style="left:18.60px;top:166.80px" width="12" height="12" viewBox="0 0 12 12"><path d="M9.6,10.4 Q10.6,5 5.6,4.6 V2.2 L1.6,5.8 L5.6,9.4 V7 Q8.4,7 9.6,10.4Z" fill="#a4a8b4"/><rect x="9.6" y="0.2" width="2.2" height="1.6" fill="#15161c"/></svg>
<svg class="abs" style="left:3.90px;top:181.60px" width="12" height="12" viewBox="0 0 12 12"><path d="M1.6,1 V11 M3.6,1.6 V11 M5.6,3 V11" stroke="#2a2c36" stroke-width="0.9"/><path d="M2,11 Q4,5.6 7,7 Q10.6,4.6 10.6,8.6 Q10,11.4 6,11.2Z" fill="#f08a2a"/><path d="M7.2,1.2 L10.8,3.2 M8.6,0.8 L8.4,3.6" stroke="#2a2c36" stroke-width="0.7"/><rect x="9.6" y="0.2" width="2.2" height="1.6" fill="#15161c"/></svg>
<svg class="abs" style="left:18.60px;top:181.60px" width="12" height="12" viewBox="0 0 12 12"><path d="M0.8,4 H4.4 L5.4,5.2 H11 V11 H0.8Z" fill="#f2e6a8" stroke="#b8a64a" stroke-width="0.6"/><rect x="2.4" y="6.4" width="7" height="4" fill="#fafafa"/><path d="M3,4 Q4,0.6 7.4,1.8 L8,0.6 L9.6,3.6 L6.4,4.2 L7,3 Q5,2.4 4.4,4Z" fill="#3fae3a"/></svg>
<svg class="abs" style="left:3.80px;top:208.20px" width="12" height="12" viewBox="0 0 12 12"><path d="M2.4,8.6 L8.8,2.2 M4.6,10.6 L10.8,4.4" stroke="#30333f" stroke-width="0.9"/><path d="M1.4,7 L3.8,9.6 M7.4,1.2 L10,3.6" stroke="#3f86d8" stroke-width="1.2"/></svg>
<svg class="abs" style="left:18.80px;top:208.20px" width="12" height="12" viewBox="0 0 12 12"><path d="M1.2,10.4 H10.6 L7.6,3.2Z" fill="none" stroke="#3f86d8" stroke-width="1"/><path d="M8.6,7.6 L10.8,10.6" stroke="#30333f" stroke-width="1.2"/></svg>
<svg class="abs" style="left:3.80px;top:223.00px" width="12" height="12" viewBox="0 0 12 12"><path d="M1.6,10.4 L5,7 L5,1.8" stroke="#3f86d8" stroke-width="1.1" fill="none"/><path d="M5,7 L9.6,5.6" stroke="#d8302a" stroke-width="1.2"/><circle cx="5" cy="2" r="1" fill="#3f86d8"/><circle cx="1.8" cy="10.2" r="1" fill="#3f86d8"/><circle cx="9.8" cy="5.6" r="1" fill="#d8302a"/></svg>
<svg class="abs" style="left:18.80px;top:223.00px" width="12" height="12" viewBox="0 0 12 12"><path d="M1.6,10.4 L5,7 L5,1.8" stroke="#3f86d8" stroke-width="1.1" fill="none"/><path d="M5,7 L9.6,5.6" stroke="#d8302a" stroke-width="1.2"/><circle cx="5" cy="2" r="1" fill="#3f86d8"/><circle cx="1.8" cy="10.2" r="1" fill="#3f86d8"/><circle cx="9.8" cy="5.6" r="1" fill="#d8302a"/><text x="7.2" y="11.6" font-family="Liberation Sans,sans-serif" font-weight="bold" font-size="6.2" fill="#15161c">X</text></svg>
<svg class="abs" style="left:3.80px;top:238.00px" width="12" height="12" viewBox="0 0 12 12"><path d="M1.6,10.4 L5,7 L5,1.8" stroke="#3f86d8" stroke-width="1.1" fill="none"/><path d="M5,7 L9.6,5.6" stroke="#d8302a" stroke-width="1.2"/><circle cx="5" cy="2" r="1" fill="#3f86d8"/><circle cx="1.8" cy="10.2" r="1" fill="#3f86d8"/><circle cx="9.8" cy="5.6" r="1" fill="#d8302a"/><text x="7.2" y="11.6" font-family="Liberation Sans,sans-serif" font-weight="bold" font-size="6.2" fill="#15161c">Y</text></svg>
<svg class="abs" style="left:18.80px;top:238.00px" width="12" height="12" viewBox="0 0 12 12"><path d="M1.6,10.4 L5,7 L5,1.8" stroke="#3f86d8" stroke-width="1.1" fill="none"/><path d="M5,7 L9.6,5.6" stroke="#d8302a" stroke-width="1.2"/><circle cx="5" cy="2" r="1" fill="#3f86d8"/><circle cx="1.8" cy="10.2" r="1" fill="#3f86d8"/><circle cx="9.8" cy="5.6" r="1" fill="#d8302a"/><text x="7.2" y="11.6" font-family="Liberation Sans,sans-serif" font-weight="bold" font-size="6.2" fill="#15161c">Z</text></svg>
<svg class="abs" style="left:3.80px;top:252.80px" width="12" height="12" viewBox="0 0 12 12"><path d="M1.8,10 L9.4,2.4" stroke="#30333f" stroke-width="1.1"/><circle cx="1.8" cy="10" r="1.1" fill="#3f86d8"/><circle cx="9.4" cy="2.4" r="1.1" fill="#3f86d8"/></svg>
<svg class="abs" style="left:18.80px;top:252.80px" width="12" height="12" viewBox="0 0 12 12"><path d="M1.8,10 L9.4,2.4" stroke="#30333f" stroke-width="1.1"/><circle cx="1.8" cy="10" r="1.1" fill="#3f86d8"/><circle cx="9.4" cy="2.4" r="1.1" fill="#3f86d8"/><text x="7.2" y="11.6" font-family="Liberation Sans,sans-serif" font-weight="bold" font-size="6.2" fill="#15161c">X</text></svg>
<svg class="abs" style="left:3.80px;top:267.50px" width="12" height="12" viewBox="0 0 12 12"><path d="M1.8,10 L9.4,2.4" stroke="#30333f" stroke-width="1.1"/><circle cx="1.8" cy="10" r="1.1" fill="#3f86d8"/><circle cx="9.4" cy="2.4" r="1.1" fill="#3f86d8"/><text x="7.2" y="11.6" font-family="Liberation Sans,sans-serif" font-weight="bold" font-size="6.2" fill="#15161c">Y</text></svg>
<svg class="abs" style="left:18.80px;top:267.50px" width="12" height="12" viewBox="0 0 12 12"><path d="M1.8,10 L9.4,2.4" stroke="#30333f" stroke-width="1.1"/><circle cx="1.8" cy="10" r="1.1" fill="#3f86d8"/><circle cx="9.4" cy="2.4" r="1.1" fill="#3f86d8"/><text x="7.2" y="11.6" font-family="Liberation Sans,sans-serif" font-weight="bold" font-size="6.2" fill="#15161c">Z</text></svg>
<div class="abs" style="left:34.00px;top:554.00px;width:780.00px;height:2.00px;background:#3c5780;"></div>
<div id="viewport" style="left:34px;width:780px;top:51.2px;height:504.3px;"><svg width="780" height="504.3" viewBox="34 51.2 780 504.3">
<defs>
<linearGradient id="og" x1="150" y1="0" x2="440" y2="0" gradientUnits="userSpaceOnUse">
<stop offset="0" stop-color="#e47a04"/><stop offset="1" stop-color="#e97f06"/>
</linearGradient>
<linearGradient id="cr1" x1="0" y1="98" x2="0" y2="486" gradientUnits="userSpaceOnUse"><stop offset="0" stop-color="#9a4c02" stop-opacity="0"/><stop offset="0.13" stop-color="#9a4c02"/><stop offset="0.7" stop-color="#9a4c02"/><stop offset="0.95" stop-color="#9a4c02" stop-opacity="0"/></linearGradient>
<linearGradient id="cr2" x1="0" y1="98" x2="0" y2="486" gradientUnits="userSpaceOnUse"><stop offset="0" stop-color="#f29a32" stop-opacity="0"/><stop offset="0.13" stop-color="#f29a32"/><stop offset="0.7" stop-color="#f29a32"/><stop offset="0.95" stop-color="#f29a32" stop-opacity="0"/></linearGradient>
<linearGradient id="yg" x1="0" y1="496" x2="0" y2="522" gradientUnits="userSpaceOnUse"><stop offset="0" stop-color="#fefe7c"/><stop offset="1" stop-color="#e9e77f"/></linearGradient>
<filter id="b1" x="-20%" y="-20%" width="140%" height="140%"><feGaussianBlur stdDeviation="0.7"/></filter>
<filter id="b2" x="-50%" y="-20%" width="200%" height="140%"><feGaussianBlur stdDeviation="5"/></filter>
<filter id="b4" filterUnits="userSpaceOnUse" x="-100" y="-100" width="900" height="800"><feGaussianBlur stdDeviation="40"/></filter>
<filter id="b3" x="-50%" y="-20%" width="200%" height="140%"><feGaussianBlur stdDeviation="9"/></filter>
<clipPath id="bladeclip"><use href="#blade"/></clipPath>
</defs>
<!-- SHAPES -->
<path id="blade" fill="url(#og)" d="M215.7,51 L318.2,51 L320,52 L340,63 L360,72 L370.4,75.6 L379.7,78.2 L382,76 L384.9,74.5 L390,73 L393,74.5 L395.3,76.6 L398.9,80.7 L398.6,86 L398.4,91.1 L403.6,94.2 L410.8,97.3 L416,100.5 L420.2,101.5 L420.4,98 L420.7,95.3 L421.8,93.5 L423.3,92.7 L426,94 L428.5,96.3 L432.6,102.5 L434.2,111.9 L435,123 L435,148 L434,173 L431.7,190 L428,215 L424,240 L421.7,255 L410,300 L392,340 L372,390 L355,440 L340,515 L300,508 L255,492 L193,486.6 L144,488 L146.3,475 L148.8,455 L151.3,430 L156.3,405 L162.6,380 L172.6,355 L182.6,330 L190,315 L198.8,290 L208.8,265 L217.6,240 L223.8,215 L226.3,190 L230,173 L232.5,148 L232,123 L229,98 L222.5,73 L216,52 Z"/>
<g clip-path="url(#bladeclip)">
<path filter="url(#b4)" fill="none" stroke="#a85300" stroke-width="134" opacity="0.78" d="M215.7,51 L216.0,52 L222.5,73 L229.0,98 L232.0,123 L232.5,148 L230.0,173 L226.3,190 L223.8,215 L217.6,240 L208.8,265 L198.8,290 L190.0,315 L182.6,330 L172.6,355 L162.6,380 L156.3,405 L151.3,430 L148.8,455 L146.3,475 L144.0,488 L143.0,500"/>
<path filter="url(#b1)" fill="none" stroke="#f39a34" stroke-width="2.2" opacity="0.7" d="M216.3,51 L216.6,52 L223.1,73 L229.6,98 L232.6,123 L233.1,148 L230.6,173 L226.9,190 L224.4,215 L218.2,240 L209.4,265 L199.4,290 L190.6,315 L183.2,330 L173.2,355 L163.2,380 L156.9,405 L151.9,430 L149.4,455 L146.9,475 L144.6,488 L143.6,500"/>
<path filter="url(#b1)" fill="none" stroke="url(#cr2)" stroke-width="1.4" opacity="0.45" d="M263,100 C260.5,130 256.5,160 250.5,194 S236.5,245 222.5,290 S203.5,345 194.5,365 S180.5,420 177.5,486"/>
<path filter="url(#b1)" fill="none" stroke="url(#cr1)" stroke-width="2.4" opacity="0.35" d="M265.5,100 C263,130 259,160 253,194 S239,245 225,290 S206,345 197,365 S183,420 180,486"/>
</g>
<path id="platform" fill="#e57a06" d="M144,488 L135,491 L126.6,496 L127.6,502.2 L151.4,509.4 L154.5,518.7 L165,523 L162.8,531 L190.8,541.5 L203.2,523 L198,521 L190.8,520.8 L188.7,527 L180.5,527 L179.4,514.6 L246.8,521 L300,529 L340,516 L300,502 L255,491.8 L193,486.6 Z"/>
<!-- shading details -->
<path filter="url(#b1)" fill="#b25a04" d="M245,50 L305,50 L304.5,58 L302,64 L298,61 L294,58.5 L288,58 L280,60 L272,62.5 L266,63 L258,60.5 L249,56 Z"/>
<path filter="url(#b1)" fill="none" stroke="#7c3f04" stroke-width="3" opacity="0.75" stroke-linejoin="round" d="M249,54.5 L258,58.5 L266,61 L272,60.5 L280,58 L288,56 L294,56.5 L298,59 L301.5,62.5 L303.5,56"/>
<path filter="url(#b1)" fill="none" stroke="#a35205" stroke-width="2.2" opacity="0.85" d="M388.2,92 L388.6,100.5 Q393,105.5 398.4,106.2 Q405,106 409.6,104 L410.4,99.5"/>
<path fill="#7a3d05" d="M396.2,81 L398.2,82 L397.8,91 L396,90 Z M387,88.5 l2,0 l0,2 l-2,0 Z M422,101.5 l1.5,0 l0,2 l-1.5,0 Z"/>
<path fill="#f59b30" d="M126.6,496 L135,491.3 L145,488.3 L170,486.6 L193,486.2 L255,491.3 L300,501.3 L306,502.8 L306,504.6 L300,503.1 L255,493.2 L193,488.2 L170,488.6 L146,490.4 L136,493.4 L128,497.5 Z"/>
<ellipse cx="176" cy="498.7" rx="8.2" ry="3.6" fill="#b55c06"/>
<ellipse cx="173.2" cy="499.5" rx="4.8" ry="2.3" fill="#3d5984"/>
<path fill="#c96904" d="M154.5,518.7 L165,523 L162.8,531 L190.8,541.5 L194,536.5 L167,527.5 L168,521.5 L156,516 Z"/>
<!-- scan gaps -->
<g stroke="#131b45" fill="none" stroke-linecap="butt" clip-path="url(#bladeclip)">
<path d="M338.1,130.7 L353.7,133.8" stroke-width="0.7" stroke-dasharray="0.8 3"/>
<path d="M338.1,142.4 L397.7,149.4" stroke-width="0.8" stroke-dasharray="1 2.5 0.6 3"/>
<path d="M358.9,143.2 L430.1,165.7" stroke-width="0.9" stroke-dasharray="3 1 6 1.5 2 1"/>
<path d="M338.1,148.9 L353.7,152.7" stroke-width="0.8" stroke-dasharray="0.8 2.5"/>
<path d="M364.0,156.1 L374.4,158.2" stroke-width="0.9" stroke-dasharray="4 2"/>
<path d="M335.5,163.1 L351.1,167.0" stroke-width="0.8" stroke-dasharray="0.8 3"/>
<path d="M384.8,162.6 L434.0,179.4" stroke-width="1.5" stroke-dasharray="8 0.8 14 1 5 0.6"/>
<path d="M384.8,167.3 L434.0,183.6" stroke-width="1.3" stroke-dasharray="5 1 9 1.2 12 0.8"/>
<path d="M386.1,164.9 L397.7,168.5" stroke-width="1.2" stroke-dasharray="2 1"/>
<path d="M334.2,169.6 L384.8,185.1" stroke-width="1.5" stroke-dasharray="10 0.8 7 1 14 0.7"/>
<path d="M334.2,173.5 L384.8,188.5" stroke-width="1.2" stroke-dasharray="3 1.2 6 1 2 1.5"/>
<path d="M335.5,178.7 L379.6,190.8" stroke-width="1.3" stroke-dasharray="7 1 4 1.5 9 0.8"/>
<path d="M383.5,177.9 L423.6,191.9" stroke-width="1.3" stroke-dasharray="9 1 6 0.8"/>
<path d="M383.5,183.3 L423.6,197.0" stroke-width="1.4" stroke-dasharray="6 0.8 11 1"/>
<path d="M397.7,187.7 L422.3,195.0" stroke-width="1.0" stroke-dasharray="3 1.5"/>
<path d="M335.5,192.9 L371.8,200.7" stroke-width="0.8" stroke-dasharray="0.8 3.5 0.8 2"/>
<path d="M348.5,199.4 L405.5,209.7" stroke-width="0.8" stroke-dasharray="0.8 3 1.2 4"/>
<path d="M379.6,206.6 L419.7,220.9" stroke-width="1.5" stroke-dasharray="12 0.8 8 0.8"/>
<path d="M379.6,211.8 L418.4,224.8" stroke-width="1.4" stroke-dasharray="7 1 10 0.8"/>
<path d="M384.8,217.5 L415.9,227.1" stroke-width="0.9" stroke-dasharray="2 2"/>
<path d="M377.0,227.9 L419.7,242.1" stroke-width="1.3" stroke-dasharray="9 1 5 0.8 12 1"/>
<path d="M377.0,233.1 L410.7,244.2" stroke-width="1.1" stroke-dasharray="4 1.5 6 1"/>
<path d="M335.5,208.4 L343.3,213.6" stroke-width="0.7" stroke-dasharray="0.8 4"/>
<path d="M426.3,155.3 L435.7,158.2" stroke-width="1.15"/>
<path d="M426.7,157.7 L435.4,160.4" stroke-width="1.15"/>
<path d="M428.0,160.2 L435.2,162.3" stroke-width="1.15"/>
<path d="M426.4,162.6 L434.9,165.1" stroke-width="1.15"/>
<path d="M426.5,165.0 L434.6,167.4" stroke-width="1.15"/>
<path d="M426.8,167.4 L434.4,169.7" stroke-width="1.15"/>
<path d="M425.3,169.8 L434.1,172.4" stroke-width="1.15"/>
<path d="M426.5,172.2 L433.8,174.4" stroke-width="1.15"/>
<path d="M426.9,174.6 L433.6,176.6" stroke-width="1.15"/>
<path d="M427.5,177.0 L433.3,178.7" stroke-width="1.15"/>
<path d="M425.0,179.4 L433.0,181.8" stroke-width="1.15"/>
<path d="M425.8,181.8 L432.8,183.9" stroke-width="1.15"/>
<path d="M425.0,184.2 L432.5,186.5" stroke-width="1.15"/>
<path d="M427.6,186.7 L432.2,188.1" stroke-width="1.15"/>
<path d="M422.4,189.1 L432.0,192.0" stroke-width="1.15"/>
<path d="M419.7,191.5 L431.7,195.1" stroke-width="1.15"/>
<path d="M423.6,193.9 L431.4,196.3" stroke-width="1.15"/>
<path d="M423.5,196.3 L431.2,198.6" stroke-width="1.15"/>
<path d="M422.2,198.7 L430.9,201.3" stroke-width="1.15"/>
<path d="M422.0,201.1 L430.7,203.7" stroke-width="1.15"/>
<path d="M420.1,203.5 L430.4,206.6" stroke-width="1.15"/>
<path d="M419.5,205.9 L430.1,209.1" stroke-width="1.15"/>
<path d="M421.7,208.3 L429.9,210.8" stroke-width="1.15"/>
<path d="M419.7,210.8 L429.6,213.7" stroke-width="1.15"/>
<path d="M420.3,213.2 L429.3,215.9" stroke-width="1.15"/>
<path d="M413.5,215.6 L429.1,220.2" stroke-width="1.15"/>
<path d="M412.4,218.0 L428.8,222.9" stroke-width="1.15"/>
<path d="M414.6,220.4 L428.5,224.6" stroke-width="1.15"/>
<path d="M414.5,222.8 L428.3,226.9" stroke-width="1.15"/>
<path d="M416.6,225.2 L428.0,228.6" stroke-width="1.15"/>
<path d="M414.9,227.6 L427.7,231.5" stroke-width="1.15"/>
<path d="M415.5,230.0 L427.5,233.6" stroke-width="1.15"/>
<path d="M414.8,232.4 L427.2,236.2" stroke-width="1.15"/>
<path d="M415.7,234.8 L426.9,238.2" stroke-width="1.15"/>
<path d="M414.6,237.3 L426.7,240.9" stroke-width="1.15"/>
<path d="M413.7,239.7 L426.4,243.5" stroke-width="1.15"/>
<path d="M417.4,242.1 L426.1,244.7" stroke-width="1.15"/>
<path d="M417.4,244.5 L425.9,247.0" stroke-width="1.15"/>
<path d="M416.6,246.9 L425.6,249.6" stroke-width="1.15"/>
<path d="M415.9,249.3 L425.4,252.1" stroke-width="1.15"/>
<path d="M413.9,251.7 L425.1,255.1" stroke-width="1.15"/>
</g>
<path fill="#131b45" d="M351.6,156.2h0.9v0.9h-0.9z M340.5,198.2h0.9v0.9h-0.9z M363.6,205.3h0.9v0.9h-0.9z M362.6,215.1h0.9v0.9h-0.9z M394.8,130.8h0.9v0.9h-0.9z M350.2,210.9h0.9v0.9h-0.9z M368.4,217.1h0.9v0.9h-0.9z M363.3,137.2h0.9v0.9h-0.9z M379.6,199.3h0.9v0.9h-0.9z M354.4,138.4h0.9v0.9h-0.9z M358.8,215.6h0.9v0.9h-0.9z M388.6,141.1h0.9v0.9h-0.9z M352.8,139.6h0.9v0.9h-0.9z M339.7,200.9h0.9v0.9h-0.9z M348.0,180.0h0.9v0.9h-0.9z M366.8,147.5h0.9v0.9h-0.9z M386.7,142.3h0.9v0.9h-0.9z M380.6,141.0h0.9v0.9h-0.9z M365.0,149.5h0.9v0.9h-0.9z M354.4,216.2h0.9v0.9h-0.9z M391.7,157.5h0.9v0.9h-0.9z M397.4,149.3h0.9v0.9h-0.9z M363.1,206.0h0.9v0.9h-0.9z M380.4,139.6h0.9v0.9h-0.9z M404.7,149.5h0.9v0.9h-0.9z M353.6,198.8h0.9v0.9h-0.9z M358.6,156.8h0.9v0.9h-0.9z M340.7,138.7h0.9v0.9h-0.9z M376.3,152.1h0.9v0.9h-0.9z M377.6,163.5h0.9v0.9h-0.9z M367.2,215.2h0.9v0.9h-0.9z M369.4,181.3h0.9v0.9h-0.9z M396.2,146.8h0.9v0.9h-0.9z M346.3,210.7h0.9v0.9h-0.9z M392.7,152.7h0.9v0.9h-0.9z M348.8,195.9h0.9v0.9h-0.9z M401.3,148.0h0.9v0.9h-0.9z M402.0,208.4h0.9v0.9h-0.9z M377.8,167.8h0.9v0.9h-0.9z M342.8,134.1h0.9v0.9h-0.9z M402.9,151.7h0.9v0.9h-0.9z M384.8,153.4h0.9v0.9h-0.9z M393.2,183.3h0.9v0.9h-0.9z M356.1,146.2h0.9v0.9h-0.9z M385.9,136.8h0.9v0.9h-0.9z M351.5,180.0h0.9v0.9h-0.9z M395.2,184.8h0.9v0.9h-0.9z M355.1,211.5h0.9v0.9h-0.9z M349.8,132.2h0.9v0.9h-0.9z M354.4,170.0h0.9v0.9h-0.9z M339.8,146.3h0.9v0.9h-0.9z M361.3,181.1h0.9v0.9h-0.9z M344.7,162.6h0.9v0.9h-0.9z M397.9,217.1h0.9v0.9h-0.9z M381.5,191.6h0.9v0.9h-0.9z M376.4,143.1h0.9v0.9h-0.9z M338.0,132.3h0.9v0.9h-0.9z M399.2,192.5h0.9v0.9h-0.9z M402.9,132.6h0.9v0.9h-0.9z M380.0,173.2h0.9v0.9h-0.9z M386.6,158.8h0.9v0.9h-0.9z M405.4,137.4h0.9v0.9h-0.9z M373.7,195.6h0.9v0.9h-0.9z M398.5,195.7h0.9v0.9h-0.9z M384.8,200.6h0.9v0.9h-0.9z M399.5,161.7h0.9v0.9h-0.9z M383.5,210.1h0.9v0.9h-0.9z M396.5,167.5h0.9v0.9h-0.9z M390.8,206.8h0.9v0.9h-0.9z M375.6,185.8h0.9v0.9h-0.9z"/>
<path fill="#2b3d78" opacity="0.95" d="M192.1,394.1h1.1v1.1h-1.1z M171.2,389.7h1.1v1.1h-1.1z M227.5,403.7h1.1v1.1h-1.1z M216.8,400.8h1.1v1.1h-1.1z M222.0,404.9h1.1v1.1h-1.1z M167.5,385.5h1.1v1.1h-1.1z M181.9,390.0h1.1v1.1h-1.1z M209.7,397.1h1.1v1.1h-1.1z M165.0,386.3h1.1v1.1h-1.1z M177.9,391.9h1.1v1.1h-1.1z M211.0,401.9h1.1v1.1h-1.1z M188.6,390.4h1.1v1.1h-1.1z M196.4,397.0h1.1v1.1h-1.1z M226.2,404.9h1.1v1.1h-1.1z M185.7,391.9h1.1v1.1h-1.1z M225.0,404.7h1.1v1.1h-1.1z M230.6,403.9h1.1v1.1h-1.1z M195.6,393.2h1.1v1.1h-1.1z M194.5,394.1h1.1v1.1h-1.1z M188.4,394.8h1.1v1.1h-1.1z M195.0,392.1h1.1v1.1h-1.1z M224.3,405.5h1.1v1.1h-1.1z M204.2,399.3h1.1v1.1h-1.1z M164.9,385.1h1.1v1.1h-1.1z M168.0,384.0h1.1v1.1h-1.1z M173.0,388.9h1.1v1.1h-1.1z M196.8,395.8h1.1v1.1h-1.1z M223.4,403.9h1.1v1.1h-1.1z M178.9,387.5h1.1v1.1h-1.1z M165.6,386.5h1.1v1.1h-1.1z M176.6,388.0h1.1v1.1h-1.1z M213.9,401.0h1.1v1.1h-1.1z M217.5,403.4h1.1v1.1h-1.1z M226.8,407.5h1.1v1.1h-1.1z M214.1,400.6h1.1v1.1h-1.1z M210.4,398.0h1.1v1.1h-1.1z M206.3,399.3h1.1v1.1h-1.1z M231.0,406.7h1.1v1.1h-1.1z M180.2,391.4h1.1v1.1h-1.1z M210.8,397.4h1.1v1.1h-1.1z M229.9,407.7h1.1v1.1h-1.1z M203.8,395.7h1.1v1.1h-1.1z M230.1,404.1h1.1v1.1h-1.1z M170.6,387.1h1.1v1.1h-1.1z M218.7,399.1h1.1v1.1h-1.1z M286.0,408.6h1.3v1.6h-1.3z M286.4,408.0h1.3v1.6h-1.3z M291.5,375.5h1.3v1.6h-1.3z M291.0,361.8h1.3v1.6h-1.3z M290.1,388.2h1.3v1.6h-1.3z M287.7,410.8h1.3v1.6h-1.3z M286.4,418.2h1.3v1.6h-1.3z M285.1,418.4h1.3v1.6h-1.3z M291.5,367.5h1.3v1.6h-1.3z M291.7,372.3h1.3v1.6h-1.3z M288.6,396.7h1.3v1.6h-1.3z M287.3,411.1h1.3v1.6h-1.3z M290.5,373.8h1.3v1.6h-1.3z M288.3,411.2h1.3v1.6h-1.3z M292.6,366.6h1.3v1.6h-1.3z M286.3,419.8h1.3v1.6h-1.3z M288.1,392.1h1.3v1.6h-1.3z M289.3,389.5h1.3v1.6h-1.3z M287.3,394.4h1.3v1.6h-1.3z M286.3,419.9h1.3v1.6h-1.3z M291.1,380.0h1.3v1.6h-1.3z M289.0,391.4h1.3v1.6h-1.3z M286.9,400.4h1.3v1.6h-1.3z M289.0,389.7h1.3v1.6h-1.3z M287.6,419.0h1.3v1.6h-1.3z M291.0,370.8h1.3v1.6h-1.3z M291.9,360.9h1.3v1.6h-1.3z M288.5,409.1h1.3v1.6h-1.3z M289.1,385.4h1.3v1.6h-1.3z M292.0,365.4h1.3v1.6h-1.3z M285.4,416.8h1.3v1.6h-1.3z M286.1,406.6h1.3v1.6h-1.3z M290.8,365.6h1.3v1.6h-1.3z M287.7,400.1h1.3v1.6h-1.3z M290.9,376.9h1.3v1.6h-1.3z M293.0,359.3h1.3v1.6h-1.3z M292.2,360.6h1.3v1.6h-1.3z M290.3,369.5h1.3v1.6h-1.3z M289.1,389.1h1.3v1.6h-1.3z M290.1,378.3h1.3v1.6h-1.3z M264.7,136.7h0.9v0.9h-0.9z M240.3,245.2h0.9v0.9h-0.9z M272.9,221.8h0.9v0.9h-0.9z M288.8,240.7h0.9v0.9h-0.9z M289.3,153.5h0.9v0.9h-0.9z M280.6,286.4h0.9v0.9h-0.9z M292.7,172.7h0.9v0.9h-0.9z M248.6,312.2h0.9v0.9h-0.9z M241.4,329.6h0.9v0.9h-0.9z M291.6,130.8h0.9v0.9h-0.9z M243.0,267.1h0.9v0.9h-0.9z M244.5,122.3h0.9v0.9h-0.9z M287.4,197.0h0.9v0.9h-0.9z M284.2,129.0h0.9v0.9h-0.9z M255.2,257.6h0.9v0.9h-0.9z M226.3,146.2h0.9v0.9h-0.9z M276.2,309.6h0.9v0.9h-0.9z M297.6,126.5h0.9v0.9h-0.9z M262.9,274.4h0.9v0.9h-0.9z M262.7,257.7h0.9v0.9h-0.9z M239.2,116.2h0.9v0.9h-0.9z M233.0,108.6h0.9v0.9h-0.9z M266.4,218.4h0.9v0.9h-0.9z M267.7,133.7h0.9v0.9h-0.9z M238.8,146.9h0.9v0.9h-0.9z"/>
<path id="dimy" fill="#e7e57f" d="M248.3,514.6 L281.4,517 L331.2,522.9 L366.4,525 L381,518.7 L426,502 L428.6,503.5 L428.6,506.5 L400,519 L418,520.5 L420,524 L414,528 L412.5,533 L412,545 L409,551 L405,555 L300,555 L300,531 L310.5,531.2 L252.4,522.9 L249.3,519.8 Z"/>
<path id="yellow" fill="url(#yg)" d="M327.8,218.8 L355.3,227.6 L380.3,236.3 L405.4,247.6 L421.7,255.6 L419.2,277.7 L414,300 L407,322 L398.8,341.4 L389,363.5 L379.4,388.4 L371.2,410.5 L365.6,432.6 L362,454.7 L360.2,465 L362.3,481.4 L368.5,502 L381,518.7 L366.4,525 L339.5,514.6 L306.3,502 L302,471 L299.9,460 L298.2,410.5 L298.2,369 L299.9,327.6 L303.5,300 L307.7,277.7 L312.7,262.6 L320.2,240 Z"/>
<g fill="#3a557f">
<path d="M331.2,522.9 L341.5,517.7 L352,520.5 L366.4,526 L360.2,529.5 L345,526 Z"/>
<path d="M369,536.2 L395,526.5 L419,518.6 L419.6,520.2 L396,528.5 L370,537.8 Z"/>
<path d="M329,545.7 L338,547 L347.7,549.8 L345,553 L343.6,555 L331,555 L332,550 Z"/>
<path d="M352,540 L362,542.5 L372,539.5 L374,541 L363,545 L353,542 Z"/>
<path d="M385,541 L392,537 L395.5,538 L393,541.5 L390,543 L391,547 L387,548 Z"/>
<path d="M360,555 L366,551.5 L380,548 L390,549.5 L405.8,552 L405,555 Z"/>
<path d="M310,545 L313,547 L316,551 L317,555 L314,555 L312,550 Z"/>
</g>
<path fill="#e07a0c" d="M343,522.5 l3,0.8 l-1,1.8 l-3,-0.8 Z M352,524.5 l2.5,0.6 l-0.5,1.5 l-2.5,-0.6 Z"/>

<!-- axes -->
<g fill="none" stroke-linecap="round">
<path d="M120.7,521.7 L55.7,555 M120.7,521.7 L195.7,552.5 L189,556" stroke="#8e9bb5" stroke-width="0.8" stroke-dasharray="2 2.2" opacity="0.85"/>
<path d="M67.3,505 L77.3,505 L77.3,521 M67.3,515 L77,506" stroke="#9aa3b8" stroke-width="0.7"/>
<path d="M67.3,523 L77,519.5 L88,524.5 L79,527.5 Z" fill="#d8d860" fill-opacity="0.6" stroke="#c9c94a" stroke-width="0.6"/>
<path d="M67.3,523 L67.3,489" stroke="#25b7c9" stroke-width="1.2"/>
<path d="M65.3,491 L67.3,485 L69.3,491 Z" fill="#3fe0ea" stroke="none"/>
<path d="M67.3,523 L81,515.5" stroke="#35b535" stroke-width="1.3"/>
<circle cx="83" cy="514.5" r="2.2" fill="#2fc22f" stroke="none"/>
<path d="M67.3,523 L78,527.5" stroke="#e02626" stroke-width="1.6"/>
<circle cx="79.5" cy="528.2" r="1.6" fill="#e83030" stroke="none"/>
<circle cx="67.3" cy="523" r="1.2" fill="#d9a0a0" stroke="none"/>
<path d="M124.8,538 L124.8,521" stroke="#25b7c9" stroke-width="1.2"/>
<path d="M122.9,523 L124.8,517.5 L126.7,523 Z" fill="#3fe0ea" stroke="none"/>
<path d="M124.8,555 L124.8,538" stroke="#d92a3a" stroke-width="1.4"/>
<path d="M124.8,555 L131,551.5" stroke="#d92a3a" stroke-width="1.4"/>
<path d="M131,551.5 L139,547.5" stroke="#35b535" stroke-width="1.4"/>
<circle cx="140.5" cy="546.8" r="2" fill="#2fc22f" stroke="none"/>
</g>
<g font-family="'Liberation Sans',sans-serif" font-size="6.5">
<text x="65" y="484.5" fill="#b8c4dc">Z</text>
<text x="86.5" y="513" fill="#d83a3a" font-size="5.5">Y</text>
<text x="84" y="533" fill="#b0a6b6" font-size="5.5">X</text>
<text x="122.5" y="516.5" fill="#b8c4dc">Z</text>
<text x="145.5" y="545.5" fill="#d83a3a" font-size="5.5">Y</text>
</g>
<text x="611" y="80" font-family="'DejaVu Sans Mono','Liberation Mono',monospace" font-size="16.6" letter-spacing="0.66" fill="#f2f2f4" xml:space="preserve">Points: 3733 K</text>
</svg></div>
<svg class="abs" style="left:36.20px;top:54.00px" width="13.6" height="13" viewBox="0 0 13.6 13"><rect x="0" y="0" width="13.6" height="13" fill="#8c8ea1"/><rect x="1.4" y="1.4" width="10.8" height="10.2" fill="#4a5a86"/><path d="M2.4,3.6H11.2M2.4,6.5H11.2M2.4,9.4H11.2" stroke="#7f92bc" stroke-width="1.5"/></svg>
<svg class="abs" style="left:52.00px;top:54.00px" width="13.6" height="13" viewBox="0 0 13.6 13"><rect x="0" y="0" width="13.6" height="13" fill="#8c8ea1"/><rect x="2.8" y="2.8" width="8" height="7.4" fill="#eef1f8"/><rect x="4.4" y="4.4" width="4.8" height="4.2" fill="#c3d2ea"/><path d="M1.2,1.2h3v1.4h-1.6v1.6h-1.4z M12.4,1.2h-3v1.4h1.6v1.6h1.4z M1.2,11.8h3v-1.4h-1.6v-1.6h-1.4z M12.4,11.8h-3v-1.4h1.6v-1.6h1.4z" fill="#35c435"/></svg>
<svg class="abs" style="left:67.77px;top:54.00px" width="13.6" height="13" viewBox="0 0 13.6 13"><rect x="0" y="0" width="13.6" height="13" fill="#8c8ea1"/><circle cx="6" cy="5.8" r="3.6" fill="#d4e2f2" stroke="#a4b4cc" stroke-width="0.8"/><path d="M8.6,8.4 L11.6,11.4" stroke="#5f6a86" stroke-width="1.5"/><path d="M2,2 L4,4" stroke="#e8ecf4" stroke-width="0.8"/></svg>
<svg class="abs" style="left:83.54px;top:54.00px" width="13.6" height="13" viewBox="0 0 13.6 13"><rect x="0" y="0" width="13.6" height="13" fill="#8c8ea1"/><path d="M5.6,8 V1.6" stroke="#3f86d8" stroke-width="1.3"/><path d="M5.6,8 L11,10.4" stroke="#35b435" stroke-width="1.3"/><path d="M5.6,8 L2.4,11.4" stroke="#d8302a" stroke-width="1.4"/><circle cx="8.4" cy="4.6" r="1.2" fill="#d8302a"/><path d="M4.2,3 L5.6,0.8 L7,3Z" fill="#3f86d8"/></svg>
<svg class="abs" style="left:99.31px;top:54.00px" width="13.6" height="13" viewBox="0 0 13.6 13"><rect x="0" y="0" width="13.6" height="13" fill="#8c8ea1"/><path d="M6.8,1.5 L11.6,4.1 L6.8,7.1 L2,4.1Z" fill="#2fd62f"/><path d="M6.8,5.3 L6.8,1.5 M6.8,5.3 L2,9.1 M6.8,5.3 L11.6,9.1" stroke="#15161c" stroke-width="0.55" fill="none"/><path d="M6.8,1.5 L11.6,4.1 L11.6,9.1 L6.8,11.8 L2,9.1 L2,4.1Z M6.8,7.1 L2,4.1 M6.8,7.1 L11.6,4.1 M6.8,7.1 L6.8,11.8" stroke="#15161c" stroke-width="0.85" fill="none" stroke-linejoin="round"/></svg>
<svg class="abs" style="left:115.08px;top:54.00px" width="13.6" height="13" viewBox="0 0 13.6 13"><rect x="0" y="0" width="13.6" height="13" fill="#8c8ea1"/><path d="M2,9.1 L6.8,5.3 L11.6,9.1 L6.8,11.8Z" fill="#2fd62f"/><path d="M6.8,5.3 L6.8,1.5 M6.8,5.3 L2,9.1 M6.8,5.3 L11.6,9.1" stroke="#15161c" stroke-width="0.55" fill="none"/><path d="M6.8,1.5 L11.6,4.1 L11.6,9.1 L6.8,11.8 L2,9.1 L2,4.1Z M6.8,7.1 L2,4.1 M6.8,7.1 L11.6,4.1 M6.8,7.1 L6.8,11.8" stroke="#15161c" stroke-width="0.85" fill="none" stroke-linejoin="round"/></svg>
<svg class="abs" style="left:130.85px;top:54.00px" width="13.6" height="13" viewBox="0 0 13.6 13"><rect x="0" y="0" width="13.6" height="13" fill="#8c8ea1"/><path d="M2,4.1 L6.8,1.5 L6.8,5.3 L2,9.1Z" fill="#2fd62f"/><path d="M6.8,5.3 L6.8,1.5 M6.8,5.3 L2,9.1 M6.8,5.3 L11.6,9.1" stroke="#15161c" stroke-width="0.55" fill="none"/><path d="M6.8,1.5 L11.6,4.1 L11.6,9.1 L6.8,11.8 L2,9.1 L2,4.1Z M6.8,7.1 L2,4.1 M6.8,7.1 L11.6,4.1 M6.8,7.1 L6.8,11.8" stroke="#15161c" stroke-width="0.85" fill="none" stroke-linejoin="round"/></svg>
<svg class="abs" style="left:146.62px;top:54.00px" width="13.6" height="13" viewBox="0 0 13.6 13"><rect x="0" y="0" width="13.6" height="13" fill="#8c8ea1"/><path d="M11.6,4.1 L6.8,7.1 L6.8,11.8 L11.6,9.1Z" fill="#1fae1f"/><path d="M6.8,5.3 L6.8,1.5 M6.8,5.3 L2,9.1 M6.8,5.3 L11.6,9.1" stroke="#15161c" stroke-width="0.55" fill="none"/><path d="M6.8,1.5 L11.6,4.1 L11.6,9.1 L6.8,11.8 L2,9.1 L2,4.1Z M6.8,7.1 L2,4.1 M6.8,7.1 L11.6,4.1 M6.8,7.1 L6.8,11.8" stroke="#15161c" stroke-width="0.85" fill="none" stroke-linejoin="round"/></svg>
<svg class="abs" style="left:162.39px;top:54.00px" width="13.6" height="13" viewBox="0 0 13.6 13"><rect x="0" y="0" width="13.6" height="13" fill="#8c8ea1"/><path d="M2,4.1 L6.8,7.1 L6.8,11.8 L2,9.1Z" fill="#2fd62f"/><path d="M6.8,5.3 L6.8,1.5 M6.8,5.3 L2,9.1 M6.8,5.3 L11.6,9.1" stroke="#15161c" stroke-width="0.55" fill="none"/><path d="M6.8,1.5 L11.6,4.1 L11.6,9.1 L6.8,11.8 L2,9.1 L2,4.1Z M6.8,7.1 L2,4.1 M6.8,7.1 L11.6,4.1 M6.8,7.1 L6.8,11.8" stroke="#15161c" stroke-width="0.85" fill="none" stroke-linejoin="round"/></svg>
<svg class="abs" style="left:178.16px;top:54.00px" width="13.6" height="13" viewBox="0 0 13.6 13"><rect x="0" y="0" width="13.6" height="13" fill="#8c8ea1"/><path d="M6.8,1.5 L11.6,4.1 L11.6,9.1 L6.8,5.3Z" fill="#1fae1f"/><path d="M6.8,5.3 L6.8,1.5 M6.8,5.3 L2,9.1 M6.8,5.3 L11.6,9.1" stroke="#15161c" stroke-width="0.55" fill="none"/><path d="M6.8,1.5 L11.6,4.1 L11.6,9.1 L6.8,11.8 L2,9.1 L2,4.1Z M6.8,7.1 L2,4.1 M6.8,7.1 L11.6,4.1 M6.8,7.1 L6.8,11.8" stroke="#15161c" stroke-width="0.85" fill="none" stroke-linejoin="round"/></svg>
<svg class="abs" style="left:193.93px;top:54.00px" width="13.6" height="13" viewBox="0 0 13.6 13"><rect x="0" y="0" width="13.6" height="13" fill="#8c8ea1"/><path d="M6.8,1.5 L11.6,4.1 L6.8,7.1 L2,4.1Z" fill="#2fd62f"/><path d="M2,4.1 L6.8,7.1 L6.8,11.8 L2,9.1Z" fill="#2fd62f"/><path d="M11.6,4.1 L6.8,7.1 L6.8,11.8 L11.6,9.1Z" fill="#1fae1f"/><path d="M6.8,5.3 L6.8,1.5 M6.8,5.3 L2,9.1 M6.8,5.3 L11.6,9.1" stroke="#15161c" stroke-width="0.55" fill="none"/><path d="M6.8,1.5 L11.6,4.1 L11.6,9.1 L6.8,11.8 L2,9.1 L2,4.1Z M6.8,7.1 L2,4.1 M6.8,7.1 L11.6,4.1 M6.8,7.1 L6.8,11.8" stroke="#15161c" stroke-width="0.85" fill="none" stroke-linejoin="round"/></svg>
<svg class="abs" style="left:36.20px;top:70.00px" width="13.6" height="13" viewBox="0 0 13.6 13"><rect x="0" y="0" width="13.6" height="13" fill="#8c8ea1"/><path d="M4,3.6 V9.8 A2.8,1.3 0 0 0 9.6,9.8 V3.6 Z" fill="#8c8ea1" stroke="#4e5060" stroke-width="0.8"/><ellipse cx="6.8" cy="3.6" rx="2.8" ry="1.3" fill="#8c8ea1" stroke="#4e5060" stroke-width="0.8"/><path d="M4,6.6 A2.8,1.3 0 0 0 9.6,6.6" fill="none" stroke="#4e5060" stroke-width="0.6"/></svg>
<svg class="abs" style="left:36.20px;top:85.70px" width="13.6" height="13" viewBox="0 0 13.6 13"><rect x="0" y="0" width="13.6" height="13" fill="#8c8ea1"/><path d="M4,3.6 V9.8 A2.8,1.3 0 0 0 9.6,9.8 V3.6 Z" fill="#8c8ea1" stroke="#4e5060" stroke-width="0.8"/><ellipse cx="6.8" cy="3.6" rx="2.8" ry="1.3" fill="#8c8ea1" stroke="#4e5060" stroke-width="0.8"/><path d="M4,6.6 A2.8,1.3 0 0 0 9.6,6.6" fill="none" stroke="#4e5060" stroke-width="0.6"/></svg>
<svg class="abs" style="left:36.20px;top:101.40px" width="13.6" height="13" viewBox="0 0 13.6 13"><rect x="0" y="0" width="13.6" height="13" fill="#8c8ea1"/><rect x="0.9" y="0.9" width="11.8" height="11.2" fill="none" stroke="#c9aa3e" stroke-width="1.8"/><path d="M4,3.6 V9.8 A2.8,1.3 0 0 0 9.6,9.8 V3.6 Z" fill="#4f86d8" stroke="#1d3a74" stroke-width="0.8"/><ellipse cx="6.8" cy="3.6" rx="2.8" ry="1.3" fill="#8db6ee" stroke="#1d3a74" stroke-width="0.8"/><rect x="4.8" y="5" width="1.3" height="4.6" fill="#a9c8f2" opacity="0.85"/></svg>
<svg class="abs" style="left:36.20px;top:117.10px" width="13.6" height="13" viewBox="0 0 13.6 13"><rect x="0" y="0" width="13.6" height="13" fill="#8c8ea1"/><path d="M4,3.6 V9.8 A2.8,1.3 0 0 0 9.6,9.8 V3.6 Z" fill="#e4e8f2" stroke="#4e5060" stroke-width="0.8"/><ellipse cx="6.8" cy="3.6" rx="2.8" ry="1.3" fill="#f4f6fa" stroke="#4e5060" stroke-width="0.8"/></svg>
<svg class="abs" style="left:36.20px;top:132.80px" width="13.6" height="13" viewBox="0 0 13.6 13"><rect x="0" y="0" width="13.6" height="13" fill="#8c8ea1"/><path d="M4,3.6 V9.8 A2.8,1.3 0 0 0 9.6,9.8 V3.6 Z" fill="#6a6c78" stroke="#3a3c46" stroke-width="0.8"/><ellipse cx="6.8" cy="3.6" rx="2.8" ry="1.3" fill="#8a8c98" stroke="#3a3c46" stroke-width="0.8"/><path d="M5.2,5.4V10.4M6.8,5.8V10.9M8.4,5.4V10.4" stroke="#3a3c46" stroke-width="0.6"/></svg>
<div class="abs" style="left:814.00px;top:62.00px;width:250.60px;height:493.00px;background:#d6dbed;"></div>
<div class="abs" style="left:814.00px;top:62.00px;width:1.20px;height:451.20px;background:#ccd2e6;"></div>
<div class="abs" style="left:810.00px;top:51.60px;width:4.00px;height:503.60px;background:#39507c;"></div>
<div class="abs" style="left:810.00px;top:51.60px;width:255.20px;height:10.80px;background:#3f5a89;"></div>
<div class="t" style="left:815.30px;top:55.00px;font-size:6.80px;color:#e6ebf5;letter-spacing:0.016px;">Acquisition de points</div>
<svg class="abs" style="left:1047.00px;top:54.50px" width="5" height="6" viewBox="0 0 5 6"><path d="M1.2,0.6 H3.8 M1.8,0.6 V3 M3.2,0.6 V3 M0.6,3.2 H4.4 M2.5,3.2 V5.6" stroke="#e6ebf5" stroke-width="0.8" fill="none"/></svg>
<svg class="abs" style="left:1055.50px;top:55.00px" width="5" height="5" viewBox="0 0 5 5"><path d="M0.6,0.6 L4.4,4.4 M4.4,0.6 L0.6,4.4" stroke="#6f86b0" stroke-width="0.8"/></svg>
<div class="abs" style="left:1064.60px;top:51.80px;width:15.40px;height:503.20px;background:#d7dcee;"></div>
<div class="abs" style="left:1065.60px;top:51.80px;width:13.00px;height:13.00px;background:#88c540;"></div>
<div class="t" style="left:1068.00px;top:55.00px;font-size:9.20px;color:#f4fae8;font-weight:bold;">Vi</div>
<div class="t" style="left:1070px;top:69.5px;font-size:7.2px;color:#2a2b3a;writing-mode:vertical-rl;transform:rotate(180deg);">Acquisition de points</div>
<svg class="abs" style="left:822.30px;top:71.30px" width="13.4" height="12.6" viewBox="0 0 13.4 12.6"><rect x="0.4" y="0.4" width="12.6" height="11.8" rx="1.8" fill="#8c8d92" stroke="#6f7076" stroke-width="0.6"/><rect x="1.6" y="1.5" width="10.2" height="9.6" rx="1" fill="none" stroke="#b5b6ba" stroke-width="0.6"/><path d="M3.4,6.4 L5.8,9 L10,3.2" stroke="#ffffff" stroke-width="1.9" fill="none"/></svg>
<svg class="abs" style="left:840.20px;top:71.30px" width="13.4" height="12.6" viewBox="0 0 13.4 12.6"><rect x="0.4" y="0.4" width="12.6" height="11.8" rx="1.8" fill="#8c8d92" stroke="#6f7076" stroke-width="0.6"/><rect x="1.6" y="1.5" width="10.2" height="9.6" rx="1" fill="none" stroke="#b5b6ba" stroke-width="0.6"/><path d="M3.6,3.2 L9.8,9.4 M9.8,3.2 L3.6,9.4" stroke="#ffffff" stroke-width="2"/></svg>
<div class="abs" style="left:858.00px;top:70.50px;width:0.60px;height:14.00px;background:#ccd1df;"></div>
<div class="abs" style="left:878.60px;top:70.50px;width:0.60px;height:14.00px;background:#ccd1df;"></div>
<svg class="abs" style="left:862.50px;top:71.50px" width="12" height="11" viewBox="0 0 12 11"><rect x="2.4" y="1.6" width="8.4" height="7" rx="0.8" fill="#9a9ca4" stroke="#7c7e88" stroke-width="0.6"/><rect x="4.6" y="3.4" width="3" height="3" fill="#c9cbd2"/><path d="M0.4,3.6 L2.8,1.2 V6Z" fill="#7c7e88"/><path d="M4,9.6 H9" stroke="#8a8c96" stroke-width="1"/></svg>
<svg class="abs" style="left:884.00px;top:71.20px" width="12" height="12" viewBox="0 0 12 12"><path d="M3,2 H8.6 L10.6,4 V11 H3Z" fill="#9a9ca4" stroke="#7c7e88" stroke-width="0.6"/><path d="M0.6,5.4 L3.6,1.6 L6.6,5.4 H4.8 V8 H2.4 V5.4Z" fill="#7c7e88"/><rect x="5" y="6.6" width="4" height="3" fill="#c9cbd2"/></svg>
<svg class="abs" style="left:899.80px;top:71.20px" width="12" height="12" viewBox="0 0 12 12"><rect x="1.4" y="1.4" width="9.4" height="9.8" rx="1.2" fill="#9a9ca4" stroke="#7c7e88" stroke-width="0.6"/><rect x="3.4" y="1.6" width="5" height="3.4" fill="#c9cbd2"/><rect x="3" y="6.8" width="6" height="4" fill="#84868f"/><rect x="6.6" y="2" width="1.2" height="2.4" fill="#7c7e88"/></svg>
<div class="abs" style="left:821.50px;top:93.80px;width:186.00px;height:10.80px;background:#cbccd3;border:0.5px solid #c3c5ce;box-sizing:border-box;"></div>
<div class="t" style="left:889.30px;top:97.00px;font-size:6.50px;color:#9da1af;letter-spacing:-0.009px;">Démarrer le scan</div>
<div class="abs" style="left:821.50px;top:108.80px;width:186.00px;height:11.20px;background:linear-gradient(#e1e4ec,#d8dbe5);border:0.6px solid #bcc0ce;box-sizing:border-box;"></div>
<div class="t" style="left:885.60px;top:112.00px;font-size:6.80px;color:#20212c;letter-spacing:-0.010px;">Arrêter l'acquisition</div>
<div class="abs" style="left:827.00px;top:128.00px;width:165.00px;height:1.40px;background:#e3e6ef;"></div>
<div class="abs" style="left:827.00px;top:135.00px;width:165.00px;height:0.90px;background:#e6e9f1;"></div>
<div class="abs" style="left:892.30px;top:124.40px;width:4.00px;height:9.20px;background:#b6bac8;border-radius:1.2px;"></div>
<svg class="abs" style="left:906.50px;top:99.60px" width="8" height="11" viewBox="0 0 8 11"><path d="M0.6,0.6 V8.6 L2.6,6.8 L4,10 L5.4,9.4 L4,6.2 H6.6Z" fill="#fbfbfd" stroke="#3a3c4a" stroke-width="0.7"/></svg>
<svg class="abs" style="left:822.00px;top:148.30px" width="5.2" height="3.6" viewBox="0 0 5.2 3.6"><path d="M0,0H5.2L2.6,3.4Z" fill="#15161c"/></svg>
<div class="t" style="left:828.60px;top:148.00px;font-size:6.40px;color:#121318;font-weight:bold;letter-spacing:-0.022px;">Paramètres scan</div>
<div class="t" style="left:825.30px;top:162.00px;font-size:6.60px;color:#1d1e28;letter-spacing:-0.009px;">Facteur d'échelle</div>
<div class="inp" style="left:879.8px;top:159.0px;width:48.6px;height:10.4px"></div>
<div class="t" style="left:882.80px;top:162.00px;font-size:6.60px;color:#c3a0ac;">1</div>
<div class="abs" style="left:919.00px;top:159.60px;width:8.80px;height:9.20px;background:#eef0f6;border-left:0.5px solid #d6dae4;"></div>
<svg class="abs" style="left:921.20px;top:160.60px" width="4" height="7.2" viewBox="0 0 4 7.2"><path d="M0.4,2.6 L2,0.6 L3.6,2.6Z M0.4,4.6 L2,6.6 L3.6,4.6Z" fill="#2a2c38"/></svg>
<div class="cb" style="left:825.6px;top:177.3px"></div>
<div class="t" style="left:834.40px;top:178.00px;font-size:6.60px;color:#9196a6;letter-spacing:-0.015px;">Activer le son</div>
<div class="cb" style="left:825.6px;top:190.3px"></div>
<svg class="abs" style="left:826.20px;top:190.50px" width="5.6" height="5.6" viewBox="0 0 5.6 5.6"><path d="M0.8,2.8 L2.2,4.4 L4.8,0.8" stroke="#a9adba" stroke-width="0.9" fill="none"/></svg>
<div class="t" style="left:834.40px;top:191.00px;font-size:6.80px;color:#9196a6;letter-spacing:-0.017px;">Vue automatique</div>
<div class="cb" style="left:825.6px;top:203.2px"></div>
<div class="t" style="left:834.40px;top:203.00px;font-size:6.60px;color:#9196a6;">Sortie maillage</div>
<div class="t" style="left:825.30px;top:217.00px;font-size:6.60px;color:#b4b9c9;letter-spacing:-0.008px;">Aperçu de la couleur de la bande</div>
<div class="abs" style="left:927.40px;top:214.80px;width:9.40px;height:9.60px;background:#dde1ef;border:0.6px solid #c9cedc;box-sizing:border-box;"></div>
<div class="t" style="left:825.30px;top:231.00px;font-size:6.70px;color:#b4b9c9;letter-spacing:0.021px;">Couleur points</div>
<div class="abs" style="left:874.20px;top:228.60px;width:9.80px;height:9.80px;background:#dde1ef;border:0.6px solid #c9cedc;box-sizing:border-box;"></div>
<div class="abs" style="left:821.50px;top:243.00px;width:186.00px;height:0.80px;background:#eceff6;"></div>
<svg class="abs" style="left:822.00px;top:250.00px" width="5.2" height="3.6" viewBox="0 0 5.2 3.6"><path d="M0,0H5.2L2.6,3.4Z" fill="#15161c"/></svg>
<div class="t" style="left:828.60px;top:249.00px;font-size:6.40px;color:#121318;font-weight:bold;letter-spacing:-0.016px;">Filtrage des données</div>
<div class="cb" style="left:825.6px;top:264.6px"></div>
<div class="t" style="left:834.40px;top:265.00px;font-size:6.60px;color:#9196a6;letter-spacing:0.015px;">Utiliser saut de grenouille</div>
<div class="inp" style="left:915.0px;top:262.6px;width:69.0px;height:10.4px"></div>
<svg class="abs" style="left:989.50px;top:261.50px" width="13" height="12" viewBox="0 0 13 12"><path d="M2,4 Q3,1 6,2.4 Q8,1 8.6,3.4 L11.6,6.6 L9,6.4 L11.6,10 L7.6,8.6 L5,10.4 L1.6,9 L4,7.6 L1.4,6.6 L3.6,5.8Z" fill="#8f929c"/><circle cx="4.4" cy="3.4" r="0.9" fill="#d9dbe2"/><path d="M3,10.6 H11" stroke="#6f727c" stroke-width="1"/></svg>
<div class="cb" style="left:825.6px;top:280.8px"></div>
<svg class="abs" style="left:826.20px;top:281.00px" width="5.6" height="5.6" viewBox="0 0 5.6 5.6"><path d="M0.8,2.8 L2.2,4.4 L4.8,0.8" stroke="#a9adba" stroke-width="0.9" fill="none"/></svg>
<div class="t" style="left:834.40px;top:281.00px;font-size:6.60px;color:#9196a6;">Sélection plan de coupe</div>
<div class="inp" style="left:910.8px;top:278.8px;width:69.2px;height:10.4px"></div>
<div class="t" style="left:913.80px;top:281.00px;font-size:6.60px;color:#8d92a4;">WPL de coupe</div>
<svg class="abs" style="left:986.00px;top:278.00px" width="12" height="12" viewBox="0 0 12 12"><path d="M2.6,9.6 V1.4" stroke="#3f86d8" stroke-width="1.4"/><path d="M2.6,9.6 H11" stroke="#d8302a" stroke-width="1.5"/><path d="M2.6,9.6 L8.6,3" stroke="#35b435" stroke-width="1.2"/><path d="M4.4,2.2 L10.6,1.4 L9,6.6 L5.6,7Z" fill="#f0d23a" stroke="#c9a020" stroke-width="0.5"/><path d="M9.8,8.4 L11.6,9.6 L9.8,10.8Z" fill="#d8302a"/></svg>
<div class="t" style="left:825.30px;top:299.00px;font-size:6.60px;color:#1d1e28;">Distance plan de coupe</div>
<div class="inp" style="left:899.0px;top:296.8px;width:49.2px;height:10.4px"></div>
<div class="t" style="left:902.00px;top:299.00px;font-size:6.60px;color:#7d93b8;">20</div>
<div class="abs" style="left:938.80px;top:297.40px;width:8.80px;height:9.20px;background:#eef0f6;border-left:0.5px solid #d6dae4;"></div>
<svg class="abs" style="left:941.00px;top:298.40px" width="4" height="7.2" viewBox="0 0 4 7.2"><path d="M0.4,2.6 L2,0.6 L3.6,2.6Z M0.4,4.6 L2,6.6 L3.6,4.6Z" fill="#2a2c38"/></svg>
<div class="cb" style="left:825.6px;top:316.5px"></div>
<div class="t" style="left:834.40px;top:317.00px;font-size:6.70px;color:#9196a6;letter-spacing:0.020px;">Appliquer un filtrage de densité</div>
<div class="inp" style="left:933.5px;top:314.5px;width:48.3px;height:10.4px"></div>
<div class="t" style="left:936.50px;top:317.00px;font-size:6.60px;color:#9aa0b4;">1</div>
<div class="abs" style="left:972.40px;top:315.10px;width:8.80px;height:9.20px;background:#eef0f6;border-left:0.5px solid #d6dae4;"></div>
<svg class="abs" style="left:974.60px;top:316.10px" width="4" height="7.2" viewBox="0 0 4 7.2"><path d="M0.4,2.6 L2,0.6 L3.6,2.6Z M0.4,4.6 L2,6.6 L3.6,4.6Z" fill="#2a2c38"/></svg>
<div class="abs" style="left:821.50px;top:329.50px;width:186.00px;height:0.80px;background:#eceff6;"></div>
<div class="cb" style="left:823.8px;top:339.8px"></div>
<svg class="abs" style="left:824.40px;top:340.00px" width="5.6" height="5.6" viewBox="0 0 5.6 5.6"><path d="M0.8,2.8 L2.2,4.4 L4.8,0.8" stroke="#a9adba" stroke-width="0.9" fill="none"/></svg>
<div class="t" style="left:832.20px;top:340.00px;font-size:6.70px;color:#9196a6;">Appliquer les filtres</div>
<svg class="abs" style="left:822.00px;top:354.70px" width="5.2" height="3.6" viewBox="0 0 5.2 3.6"><path d="M0,0H5.2L2.6,3.4Z" fill="#15161c"/></svg>
<div class="t" style="left:828.60px;top:354.00px;font-size:6.60px;color:#121318;font-weight:bold;letter-spacing:-0.005px;">Options de filtrage</div>
<div class="cb" style="left:825.6px;top:368.2px"></div>
<svg class="abs" style="left:826.20px;top:368.40px" width="5.6" height="5.6" viewBox="0 0 5.6 5.6"><path d="M0.8,2.8 L2.2,4.4 L4.8,0.8" stroke="#a9adba" stroke-width="0.9" fill="none"/></svg>
<div class="t" style="left:834.40px;top:369.00px;font-size:6.60px;color:#9196a6;letter-spacing:-0.021px;">Filtrage bande</div>
<div class="t" style="left:825.30px;top:384.00px;font-size:6.70px;color:#1d1e28;letter-spacing:0.019px;">Déviation Max</div>
<div class="inp" style="left:931.5px;top:381.8px;width:48.7px;height:10.4px"></div>
<div class="t" style="left:934.50px;top:384.00px;font-size:6.60px;color:#9aa0b4;">0.025</div>
<div class="abs" style="left:970.80px;top:382.40px;width:8.80px;height:9.20px;background:#eef0f6;border-left:0.5px solid #d6dae4;"></div>
<svg class="abs" style="left:973.00px;top:383.40px" width="4" height="7.2" viewBox="0 0 4 7.2"><path d="M0.4,2.6 L2,0.6 L3.6,2.6Z M0.4,4.6 L2,6.6 L3.6,4.6Z" fill="#2a2c38"/></svg>
<div class="t" style="left:825.30px;top:398.00px;font-size:6.60px;color:#1d1e28;letter-spacing:0.010px;">Espacement maximal des points</div>
<div class="inp" style="left:931.5px;top:395.2px;width:48.7px;height:10.4px"></div>
<div class="t" style="left:934.50px;top:398.00px;font-size:6.60px;color:#9aa0b4;">3</div>
<div class="abs" style="left:970.80px;top:395.80px;width:8.80px;height:9.20px;background:#eef0f6;border-left:0.5px solid #d6dae4;"></div>
<svg class="abs" style="left:973.00px;top:396.80px" width="4" height="7.2" viewBox="0 0 4 7.2"><path d="M0.4,2.6 L2,0.6 L3.6,2.6Z M0.4,4.6 L2,6.6 L3.6,4.6Z" fill="#2a2c38"/></svg>
<div class="cb" style="left:825.6px;top:413.8px"></div>
<div class="t" style="left:834.40px;top:414.00px;font-size:6.70px;color:#9196a6;letter-spacing:0.019px;">Densité d'échantillonnage</div>
<div class="t" style="left:825.30px;top:431.00px;font-size:6.80px;color:#1d1e28;letter-spacing:-0.018px;">Densité d'échantillonnage</div>
<div class="inp" style="left:931.5px;top:428.1px;width:48.7px;height:10.4px"></div>
<div class="t" style="left:934.50px;top:431.00px;font-size:6.60px;color:#9aa0b4;">0.25</div>
<div class="abs" style="left:970.80px;top:428.70px;width:8.80px;height:9.20px;background:#eef0f6;border-left:0.5px solid #d6dae4;"></div>
<svg class="abs" style="left:973.00px;top:429.70px" width="4" height="7.2" viewBox="0 0 4 7.2"><path d="M0.4,2.6 L2,0.6 L3.6,2.6Z M0.4,4.6 L2,6.6 L3.6,4.6Z" fill="#2a2c38"/></svg>
<div class="cb" style="left:825.6px;top:446.1px"></div>
<div class="t" style="left:834.40px;top:447.00px;font-size:6.70px;color:#9196a6;">Direction de l'angle du scan</div>
<div class="t" style="left:825.30px;top:463.00px;font-size:6.70px;color:#2a2b38;letter-spacing:-0.007px;">Direction de l'angle du scan</div>
<div class="inp" style="left:931.8px;top:460.7px;width:48.6px;height:10px"></div>
<div class="t" style="left:934.80px;top:463.00px;font-size:6.60px;color:#8fa4c4;">60</div>
<div class="t" style="left:825.30px;top:476.00px;font-size:6.70px;color:#2a2b38;">Taille du trou</div>
<div class="inp" style="left:931.8px;top:473.8px;width:48.6px;height:10px"></div>
<div class="t" style="left:934.80px;top:476.00px;font-size:6.60px;color:#9aa0b4;">3</div>
<div class="abs" style="left:971.00px;top:474.40px;width:8.80px;height:8.80px;background:#eef0f6;border-left:0.5px solid #d6dae4;"></div>
<svg class="abs" style="left:973.20px;top:475.20px" width="4" height="7.2" viewBox="0 0 4 7.2"><path d="M0.4,2.6 L2,0.6 L3.6,2.6Z M0.4,4.6 L2,6.6 L3.6,4.6Z" fill="#2a2c38"/></svg>
<div class="t" style="left:825.30px;top:489.00px;font-size:6.90px;color:#2a2b38;">Points consécutifs minimum</div>
<div class="inp" style="left:931.8px;top:487.0px;width:48.6px;height:10px"></div>
<div class="t" style="left:934.80px;top:489.00px;font-size:6.60px;color:#9aa0b4;">5</div>
<div class="abs" style="left:971.00px;top:487.60px;width:8.80px;height:8.80px;background:#eef0f6;border-left:0.5px solid #d6dae4;"></div>
<svg class="abs" style="left:973.20px;top:488.40px" width="4" height="7.2" viewBox="0 0 4 7.2"><path d="M0.4,2.6 L2,0.6 L3.6,2.6Z M0.4,4.6 L2,6.6 L3.6,4.6Z" fill="#2a2c38"/></svg>
<div class="t" style="left:825.30px;top:502.00px;font-size:6.80px;color:#2a2b38;letter-spacing:0.014px;">Changement d'angle d'inclinaison</div>
<div class="inp" style="left:931.8px;top:500.0px;width:48.6px;height:10px"></div>
<div class="t" style="left:934.80px;top:502.00px;font-size:6.60px;color:#9aa0b4;">90</div>
<div class="abs" style="left:971.00px;top:500.60px;width:8.80px;height:8.80px;background:#eef0f6;border-left:0.5px solid #d6dae4;"></div>
<svg class="abs" style="left:973.20px;top:501.40px" width="4" height="7.2" viewBox="0 0 4 7.2"><path d="M0.4,2.6 L2,0.6 L3.6,2.6Z M0.4,4.6 L2,6.6 L3.6,4.6Z" fill="#2a2c38"/></svg>
<div class="abs" style="left:1054.60px;top:86.40px;width:8.60px;height:427.00px;background:#e6e8f0;"></div>
<div class="abs" style="left:1054.60px;top:97.50px;width:8.60px;height:387.00px;background:linear-gradient(90deg,#e4e5e8,#cdcdce 25%,#cdcdce 85%,#dcdde2);"></div>
<svg class="abs" style="left:1056.60px;top:90.00px" width="5" height="3.4" viewBox="0 0 5 3.4"><path d="M0.5,3 L2.5,0.8 L4.5,3" stroke="#2a2c38" stroke-width="0.9" fill="none"/></svg>
<svg class="abs" style="left:1056.60px;top:506.40px" width="5" height="3.4" viewBox="0 0 5 3.4"><path d="M0.5,0.6 L2.5,2.8 L4.5,0.6" stroke="#2a2c38" stroke-width="0.9" fill="none"/></svg>
<div class="abs" style="left:815.40px;top:513.20px;width:248.60px;height:40.80px;background:#f2f2f5;"></div>
<div class="t" style="left:816.80px;top:515.00px;font-size:6.40px;color:#121318;font-weight:bold;letter-spacing:-0.026px;">Connecté au Bras</div>
<div class="abs" style="left:0.00px;top:555.50px;width:1080.00px;height:20.70px;background:linear-gradient(#cacdd8,#bec2cf 45%,#a4a9ba);"></div>
<div class="abs" style="left:0.00px;top:555.50px;width:1080.00px;height:0.80px;background:#d3d6e0;"></div>
<div class="t" style="left:3.80px;top:560.00px;font-size:6.30px;color:#16171f;font-weight:bold;letter-spacing:-0.024px;">Acquisition des données du Bras...</div>
<div class="abs" style="left:765.40px;top:557.60px;width:2.40px;height:7.60px;background:#4d4d38;"></div>
<svg class="abs" style="left:829.50px;top:558.20px" width="7" height="7" viewBox="0 0 7 7"><circle cx="4.2" cy="2.8" r="2" fill="#e4e8f2" stroke="#7a8096" stroke-width="0.8"/><path d="M2.8,4.4 L0.6,6.6" stroke="#5d6378" stroke-width="1"/></svg>
<div class="abs" style="left:839.20px;top:558.00px;width:3.00px;height:7.40px;background:#3f4048;"></div>
<div class="t" style="left:843.80px;top:559.00px;font-size:6.50px;color:#30323f;letter-spacing:-0.025px;">WPL de coupe XY</div>
<div class="abs" style="left:900.30px;top:557.60px;width:0.60px;height:8.00px;background:#a4a9b9;"></div>
<div class="t" style="left:903.80px;top:559.00px;font-size:6.40px;color:#30323f;letter-spacing:-0.242px;">VUE ABS</div>
<div class="abs" style="left:935.80px;top:558.00px;width:3.00px;height:7.40px;background:#8d8268;"></div>
<div class="t" style="left:940.20px;top:559.00px;font-size:6.00px;color:#16171f;font-weight:bold;letter-spacing:-0.054px;">LAYER0</div>
<div class="abs" style="left:969.50px;top:557.60px;width:0.60px;height:8.00px;background:#a4a9b9;"></div>
<div class="abs" style="left:990.50px;top:558.90px;width:18.20px;height:5.60px;background:#3f5e8e;"></div>
<div class="abs" style="left:1014.60px;top:558.90px;width:18.10px;height:5.60px;background:#3f5e8e;"></div>
<div class="abs" style="left:1038.60px;top:558.90px;width:18.20px;height:5.60px;background:#3f5e8e;"></div>
<svg class="abs" style="left:1063.80px;top:558.00px" width="8.4" height="8.4" viewBox="0 0 8.4 8.4"><circle cx="4.2" cy="4.2" r="3.8" fill="#1f3f96"/><path d="M1.6,2.4 Q3.4,1 4.6,2.2 Q4,4 2.4,4.4Z M4.8,4.6 Q6.8,3.8 7,5.6 Q6,7.4 4.6,6.6Z" fill="#3fae3a"/><circle cx="3" cy="2.6" r="0.8" fill="#9ad0f0" opacity="0.8"/></svg>
<div class="t" style="left:643.00px;top:569.00px;font-size:6.40px;color:#4a2f5a;letter-spacing:0.008px;">Choix</div>
<div class="abs" style="left:637.50px;top:567.60px;width:0.60px;height:7.60px;background:#9ea4b6;"></div>
<div class="abs" style="left:669.50px;top:567.60px;width:0.60px;height:7.60px;background:#9ea4b6;"></div>
<div class="abs" style="left:686.50px;top:567.60px;width:0.60px;height:7.60px;background:#9ea4b6;"></div>
<div class="abs" style="left:704.50px;top:567.60px;width:0.60px;height:7.60px;background:#9ea4b6;"></div>
<div class="abs" style="left:722.00px;top:567.60px;width:0.60px;height:7.60px;background:#9ea4b6;"></div>
<div class="abs" style="left:739.00px;top:567.60px;width:0.60px;height:7.60px;background:#9ea4b6;"></div>
<div class="abs" style="left:756.50px;top:567.60px;width:0.60px;height:7.60px;background:#9ea4b6;"></div>
<div class="abs" style="left:773.50px;top:567.60px;width:0.60px;height:7.60px;background:#9ea4b6;"></div>
<div class="abs" style="left:791.00px;top:567.60px;width:0.60px;height:7.60px;background:#9ea4b6;"></div>
<div class="abs" style="left:808.50px;top:567.60px;width:0.60px;height:7.60px;background:#9ea4b6;"></div>
<div class="abs" style="left:826.00px;top:567.60px;width:0.60px;height:7.60px;background:#9ea4b6;"></div>
<div class="abs" style="left:885.50px;top:567.60px;width:0.60px;height:7.60px;background:#9ea4b6;"></div>
<div class="abs" style="left:944.00px;top:567.60px;width:0.60px;height:7.60px;background:#9ea4b6;"></div>
<svg class="abs" style="left:673.40px;top:567.00px" width="9.2" height="9.2" viewBox="0 0 10 10"><rect x="0.6" y="0.6" width="8.8" height="8.8" fill="#d98a98" stroke="#a85a6a" stroke-width="0.7"/><path d="M6.6,2.6 A2.6,2.6 0 1 0 7.4,6.2" stroke="#f6e6ea" stroke-width="1.1" fill="none"/></svg>
<svg class="abs" style="left:689.40px;top:567.00px" width="9.2" height="9.2" viewBox="0 0 10 10"><rect x="1.2" y="1.8" width="6" height="5.4" fill="#9a9ca6"/><rect x="3.6" y="3.6" width="5.4" height="5" fill="#84868f"/></svg>
<svg class="abs" style="left:708.40px;top:567.00px" width="9.2" height="9.2" viewBox="0 0 10 10"><rect x="2" y="1.2" width="6.4" height="3" fill="#d8a04a"/><rect x="1.2" y="4.2" width="5" height="4.6" fill="#3f78c8"/><rect x="6.2" y="5.4" width="2.4" height="3.4" fill="#8d93a4"/></svg>
<svg class="abs" style="left:725.60px;top:565.60px" width="9" height="10.6" viewBox="0 0 9 10.6"><text x="1.4" y="8.6" font-family="Liberation Sans,sans-serif" font-weight="bold" font-size="9.4" fill="#2f63c0">?</text></svg>
<svg class="abs" style="left:742.70px;top:567.00px" width="9.2" height="9.2" viewBox="0 0 10 10"><rect x="1" y="2.4" width="4.4" height="5.4" fill="#c8202a"/><rect x="4.4" y="1.6" width="4.6" height="5" fill="#3f78c8"/><circle cx="6.8" cy="7.2" r="1.8" fill="#5d6378"/><path d="M0.6,9.6 L3,6" stroke="#d8202a" stroke-width="1.2"/></svg>
<svg class="abs" style="left:760.20px;top:567.00px" width="9.2" height="9.2" viewBox="0 0 10 10"><rect x="0.6" y="1" width="8.8" height="8.4" fill="#e8c83a"/><path d="M1.6,4 L5,2.4 L8.4,4 L5,5.6Z" fill="#b05ad0"/><path d="M1.6,4 L5,5.6 V9 L1.6,7.4Z" fill="#7a3aa8"/><path d="M8.4,4 L5,5.6 V9 L8.4,7.4Z" fill="#3f78c8"/></svg>
<svg class="abs" style="left:777.20px;top:567.00px" width="9.2" height="9.2" viewBox="0 0 10 10"><rect x="2.6" y="0.6" width="4.8" height="8.8" fill="#c9b48a" stroke="#5d5648" stroke-width="0.8"/><path d="M2.6,3.4 H7.4 M2.6,6.4 H7.4" stroke="#8a5a3a" stroke-width="0.8"/></svg>
<svg class="abs" style="left:796.00px;top:567.00px" width="9.2" height="9.2" viewBox="0 0 10 10"><path d="M5,1.4 A3.8,3.8 0 1 0 8.8,5.2" stroke="#2f9e3a" stroke-width="1.5" fill="none"/><path d="M4.4,-0.2 L7.4,1.6 L4.4,3.4Z" fill="#2f9e3a"/><circle cx="5" cy="5.2" r="1.3" fill="#20222c"/></svg>
<svg class="abs" style="left:812.40px;top:567.00px" width="9.2" height="9.2" viewBox="0 0 10 10"><rect x="0.8" y="0.8" width="8.4" height="8.4" fill="#d6dae4" stroke="#30333f" stroke-width="0.9"/><path d="M5,0.8 V9.2 M0.8,5 H9.2" stroke="#30333f" stroke-width="0.9"/></svg>
<div class="t" style="left:832.00px;top:569.00px;font-size:6.40px;color:#33405c;letter-spacing:-0.274px;">LS: 1.00 PS: 1.00</div>
<div class="t" style="left:895.00px;top:569.00px;font-size:6.70px;color:#3d3548;letter-spacing:-0.007px;">Unités: MM</div>
<div class="t" style="left:952.50px;top:569.00px;font-size:6.40px;color:#d05560;letter-spacing:-0.222px;">X = -0361.888</div>
<div class="t" style="left:992.00px;top:569.00px;font-size:6.40px;color:#4a442c;letter-spacing:-0.262px;">Y = 0107.450</div>
<div class="t" style="left:1030.00px;top:569.00px;font-size:6.40px;color:#2f4a7a;letter-spacing:-0.033px;">Z = 0000.000</div>
<div class="abs" style="left:0.00px;top:576.20px;width:1080.00px;height:3.00px;background:#050505;"></div>
</div></body></html>
